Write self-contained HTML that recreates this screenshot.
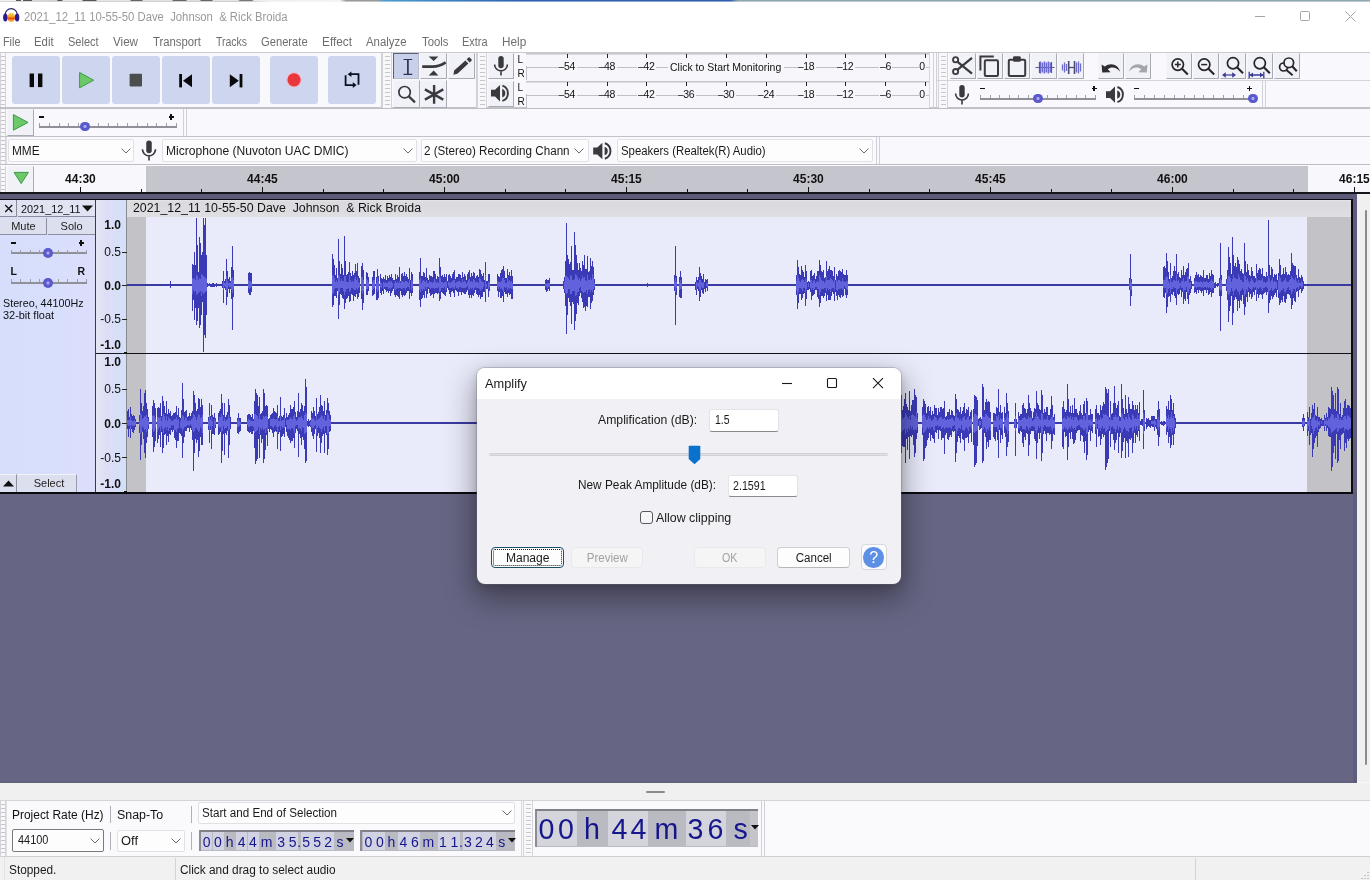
<!DOCTYPE html>
<html lang="en"><head><meta charset="utf-8"><title>Audacity</title>
<style>
*{box-sizing:border-box;margin:0;padding:0}
html,body{width:1370px;height:880px;overflow:hidden;background:#fff}
body{font-family:"Liberation Sans",sans-serif;font-size:12px;position:relative}
#app{position:absolute;left:0;top:0;width:1370px;height:880px;overflow:hidden;background:#f9f9fd;will-change:transform}
.t{position:absolute;white-space:pre;display:block}
.a{position:absolute}
.btn{position:absolute;background:#cdd6ee;border-radius:3px}
.tb{position:absolute;background:#f1f1f8;border:1px solid #a9aab4;border-top-color:#f4f4fa;border-left-color:#f4f4fa}
.grab{position:absolute;background:repeating-linear-gradient(to bottom,rgba(0,0,0,0) 0,rgba(0,0,0,0) 3px,#c6c6cc 3px,#c6c6cc 4px) no-repeat center/5px 100%,#f8f8fb;border-left:1px solid #d4d4da;border-right:1px solid #d4d4da}
.combo{position:absolute;background:#fdfdfe;border:1px solid #e0e0e6;border-radius:2px}
svg{position:absolute;overflow:visible}
</style></head>
<body><div id="app">
<div style="position:absolute;left:0px;top:0px;width:1370px;height:33px;background:#fff;"></div>
<div style="position:absolute;left:0px;top:0px;width:1370px;height:1px;background:linear-gradient(to right,#f0eef0 0,#f0eef0 16px,#5a5a5a 16px,#5a5a5a 21px,#eee 21px,#eee 23px,#555 23px,#555 32px,#d8d8d8 32px,#d0d0d0 57px,#444 58px,#666 62px,#e4e4e4 63px,#e4e4e4 82px,#555 83px,#555 96px,#e4e4e4 97px,#e4e4e4 130px,#666 131px,#666 142px,#e0e0e0 143px,#e0e0e0 172px,#666 173px,#666 186px,#ddd 187px,#ddd 200px,#666 201px,#666 212px,#e4e4e4 213px,#e4e4e4 238px,#777 240px,#777 252px,#eee 254px,#f4f4f4 340px,#9a9a9a 346px,#9a9a9a 376px,#4a9ccc 384px,#3f86c4 440px,#2f62b2 520px,#2e5eae 730px,#8ea6b0 738px,#8fa7b1 100%);"></div>
<div style="position:absolute;left:0px;top:1px;width:1370px;height:1px;background:linear-gradient(to right,#d8d8d8 0,#cfcfcf 250px,#f4f4f4 270px,#f4f4f4 340px,#c8c8c8 346px,#c4c4c4 376px,#9cc8e4 384px,#8fb4dc 440px,#8aa6d4 520px,#8aa4d2 730px,#bccbd2 738px,#bccbd2 100%);"></div>
<div style="position:absolute;left:0px;top:33px;width:1370px;height:20px;background:#fff;"></div>
<div style="position:absolute;left:0px;top:52px;width:1370px;height:1px;background:#c9c9cf;"></div>
<div style="position:absolute;left:0px;top:53px;width:1370px;height:113px;background:#f9f9fd;"></div>
<svg style="left:3px;top:8px" width="17" height="15" viewBox="0 0 17 15">
<defs><linearGradient id="ag" x1="0" y1="0" x2="0" y2="1"><stop offset="0" stop-color="#f4e060"/><stop offset="0.45" stop-color="#f59a1c"/><stop offset="0.62" stop-color="#e84a14"/><stop offset="0.8" stop-color="#f59a2a"/><stop offset="1" stop-color="#f8c070"/></linearGradient></defs>
<ellipse cx="8.2" cy="9.4" rx="3.9" ry="4.6" fill="url(#ag)"/>
<path d="M2.2 8V6.6A6 6 0 0 1 14.2 6.6V8" fill="none" stroke="#2c2c6e" stroke-width="1.2"/>
<ellipse cx="2.3" cy="9.6" rx="2.2" ry="4" fill="#2a1c92"/>
<ellipse cx="14.1" cy="9.6" rx="2.2" ry="4" fill="#2a1c92"/>
</svg>
<span class="t" style="left:24.0px;top:8.5px;font-size:12px;line-height:17px;color:#9a9a9a;transform:scaleX(0.9416);transform-origin:0 50%;">2021_12_11 10-55-50 Dave &nbsp;Johnson &nbsp;&amp; Rick Broida</span>
<svg style="left:1250px;top:8px" width="112" height="18" viewBox="0 0 112 18" fill="none" stroke="#a6a6a6" stroke-width="1">
<path d="M5 8.5H15"/><rect x="50.5" y="3.5" width="9" height="9" rx="1"/><path d="M95.5 3.5L105.5 13.5M105.5 3.5L95.5 13.5"/></svg>
<span class="t" style="left:2.6px;top:33.5px;font-size:12px;line-height:17px;color:#6e6e6e;transform:scaleX(0.8999);transform-origin:0 50%;">File</span>
<span class="t" style="left:34.4px;top:33.5px;font-size:12px;line-height:17px;color:#6e6e6e;transform:scaleX(0.9479);transform-origin:0 50%;">Edit</span>
<span class="t" style="left:68.4px;top:33.5px;font-size:12px;line-height:17px;color:#6e6e6e;transform:scaleX(0.9175);transform-origin:0 50%;">Select</span>
<span class="t" style="left:113.0px;top:33.5px;font-size:12px;line-height:17px;color:#6e6e6e;transform:scaleX(0.9693);transform-origin:0 50%;">View</span>
<span class="t" style="left:153.0px;top:33.5px;font-size:12px;line-height:17px;color:#6e6e6e;transform:scaleX(0.9429);transform-origin:0 50%;">Transport</span>
<span class="t" style="left:216.0px;top:33.5px;font-size:12px;line-height:17px;color:#6e6e6e;transform:scaleX(0.8719);transform-origin:0 50%;">Tracks</span>
<span class="t" style="left:261.4px;top:33.5px;font-size:12px;line-height:17px;color:#6e6e6e;transform:scaleX(0.9314);transform-origin:0 50%;">Generate</span>
<span class="t" style="left:322.0px;top:33.5px;font-size:12px;line-height:17px;color:#6e6e6e;transform:scaleX(0.9848);transform-origin:0 50%;">Effect</span>
<span class="t" style="left:366.4px;top:33.5px;font-size:12px;line-height:17px;color:#6e6e6e;transform:scaleX(0.9510);transform-origin:0 50%;">Analyze</span>
<span class="t" style="left:421.6px;top:33.5px;font-size:12px;line-height:17px;color:#6e6e6e;transform:scaleX(0.9424);transform-origin:0 50%;">Tools</span>
<span class="t" style="left:462.4px;top:33.5px;font-size:12px;line-height:17px;color:#6e6e6e;transform:scaleX(0.9140);transform-origin:0 50%;">Extra</span>
<span class="t" style="left:502.4px;top:33.5px;font-size:12px;line-height:17px;color:#6e6e6e;transform:scaleX(0.9806);transform-origin:0 50%;">Help</span>
<div class="grab" style="position:absolute;left:0px;top:53px;width:6px;height:55px;background:;"></div>
<div style="position:absolute;left:0px;top:107px;width:1370px;height:2px;background:linear-gradient(to bottom,#c4c6ca,#babdc0);"></div>
<div class="btn" style="left:12px;top:56px;width:48px;height:48px"></div>
<div class="btn" style="left:62px;top:56px;width:48px;height:48px"></div>
<div class="btn" style="left:112px;top:56px;width:48px;height:48px"></div>
<div class="btn" style="left:162px;top:56px;width:48px;height:48px"></div>
<div class="btn" style="left:212px;top:56px;width:48px;height:48px"></div>
<div class="btn" style="left:270px;top:56px;width:48px;height:48px"></div>
<div class="btn" style="left:328px;top:56px;width:48px;height:48px"></div>
<svg style="left:12px;top:56px" width="48" height="48" viewBox="0 0 48 48"><rect x="17.6" y="17.5" width="4.4" height="13.6" fill="#0a0a0a"/><rect x="26" y="17.5" width="4.4" height="13.6" fill="#0a0a0a"/></svg>
<svg style="left:62px;top:56px" width="48" height="48" viewBox="0 0 48 48"><path d="M17.6 16.5L31.6 24.2L17.6 31.8Z" fill="#6cc868" stroke="#3f9a45" stroke-width="1" stroke-linejoin="round"/></svg>
<svg style="left:112px;top:56px" width="48" height="48" viewBox="0 0 48 48"><rect x="17.6" y="17.8" width="12.4" height="12.6" rx="0.8" fill="#4a4e4c"/></svg>
<svg style="left:162px;top:56px" width="48" height="48" viewBox="0 0 48 48"><rect x="17.2" y="18" width="2.8" height="13.4" fill="#0a0a0a"/><path d="M30 18.2V31.2L21 24.7Z" fill="#0a0a0a"/></svg>
<svg style="left:212px;top:56px" width="48" height="48" viewBox="0 0 48 48"><rect x="27.6" y="18" width="2.8" height="13.4" fill="#0a0a0a"/><path d="M17.8 18.2V31.2L26.8 24.7Z" fill="#0a0a0a"/></svg>
<svg style="left:270px;top:56px" width="48" height="48" viewBox="0 0 48 48"><circle cx="24" cy="23.8" r="7.6" fill="#f5b8c4"/><circle cx="24" cy="23.8" r="6.6" fill="#e8383c"/></svg>
<svg style="left:328px;top:56px" width="48" height="48" viewBox="0 0 48 48"><path d="M22.6 18.2H30.5V28.8M17.6 19.2V29.1H25.6" fill="none" stroke="#0c1020" stroke-width="1.8"/><path d="M19.6 18.2L23.4 15.4V21Z M28.6 29.1L24.8 26.3V31.9Z" fill="#0c1020"/></svg>
<div class="grab" style="position:absolute;left:382px;top:53px;width:10px;height:55px;background:;"></div>
<div style="position:absolute;left:381px;top:53px;width:1px;height:55px;background:#d0d0d8;"></div>
<div class="tb" style="left:393px;top:53px;width:26px;height:26px;background:#c9d0e9;border-color:#5c6074 #b8bccc #b8bccc #5c6074"></div>
<div class="tb" style="left:420px;top:53px;width:27px;height:26px"></div>
<div class="tb" style="left:448px;top:53px;width:27px;height:26px"></div>
<div class="tb" style="left:393px;top:80px;width:27px;height:28px"></div>
<div class="tb" style="left:420px;top:80px;width:27px;height:28px"></div>
<svg style="left:393px;top:53px" width="26" height="26" viewBox="0 0 26 26"><path d="M10.6 6.5H19.2M10.6 21.3H19.2" fill="none" stroke="#2c3254" stroke-width="1.2"/><path d="M14.9 6.5V21.3" fill="none" stroke="#2c3254" stroke-width="1.7"/></svg>
<svg style="left:420px;top:53px" width="26" height="26" viewBox="0 0 26 26"><path d="M8.6 3.6H18.4L13.7 7.9Z M8.6 22.4H18.4L13.7 17.6Z" fill="#3a3a3e"/><path d="M2.2 13.6H12.4C18 13.6 22 12 25.6 9.4" fill="none" stroke="#3a3a3e" stroke-width="2.6"/></svg>
<svg style="left:448px;top:53px" width="26" height="26" viewBox="0 0 26 26"><path d="M5.4 21.8L6.2 17.6L17.4 7.4L20.4 10.6L9.4 20.8Z" fill="#3a3a3e"/><path d="M18.6 6.3L20.6 4.5Q21.2 4 21.8 4.6L23.6 6.6Q24.1 7.2 23.5 7.8L21.6 9.5Z" fill="#3a3a3e"/></svg>
<svg style="left:393px;top:81px" width="26" height="26" viewBox="0 0 26 26"><circle cx="11.6" cy="11.2" r="5.7" fill="none" stroke="#3a3a3e" stroke-width="1.7"/><path d="M15.8 15.4L22 21.4" stroke="#3a3a3e" stroke-width="2.2"/></svg>
<svg style="left:420px;top:81px" width="26" height="26" viewBox="0 0 26 26"><path d="M14.1 4V22.8M4.9 8.4L23.3 18.6M4.9 18.6L23.3 8.4" stroke="#3a3a3e" stroke-width="2.4" fill="none"/></svg>
<div class="grab" style="position:absolute;left:477px;top:53px;width:10px;height:55px;background:;"></div>
<div style="position:absolute;left:476px;top:53px;width:1px;height:55px;background:#d0d0d8;"></div>
<div class="tb" style="left:488px;top:53px;width:26px;height:26px"></div>
<div class="tb" style="left:488px;top:81px;width:26px;height:26px"></div>
<svg style="left:488px;top:53px" width="26" height="26" viewBox="0 0 26 26"><g transform="translate(13,13.3)"><rect x="-2.7" y="-10.4" width="5.4" height="12.4" rx="2.7" fill="#3a3a3e"/><path d="M-6.4 -1.8A6.4 6.4 0 0 0 6.4 -1.8M0 4.6V9.2" fill="none" stroke="#3a3a3e" stroke-width="1.6"/></g></svg>
<svg style="left:488px;top:81px" width="26" height="26" viewBox="0 0 26 26"><g transform="translate(13,12.2)"><path d="M-10 -3.4H-6L-1 -8.2V8.2L-6 3.4H-10Z" fill="#3a3a3e"/><path d="M1.4 -7.6A8 8 0 0 1 1.4 7.6" fill="none" stroke="#3a3a3e" stroke-width="1.9"/><path d="M1.2 -4.2A4.4 4.4 0 0 1 1.2 4.2Z" fill="#3a3a3e"/></g></svg>
<span class="t" style="left:517.6px;top:52.9px;font-size:10px;line-height:14px;color:#111;">L</span>
<span class="t" style="left:517.6px;top:67.3px;font-size:10px;line-height:14px;color:#111;">R</span>
<span class="t" style="left:517.6px;top:80.9px;font-size:10px;line-height:14px;color:#111;">L</span>
<span class="t" style="left:517.6px;top:94.9px;font-size:10px;line-height:14px;color:#111;">R</span>
<div style="position:absolute;left:526px;top:53px;width:404px;height:55px;background:#f6f6fb;"></div>
<div style="position:absolute;left:526px;top:53px;width:404px;height:1px;background:#c4c4cc;"></div>
<div style="position:absolute;left:526px;top:54px;width:404px;height:1px;background:#dcdce4;"></div>
<div style="position:absolute;left:526px;top:67px;width:404px;height:1px;background:#c0c0c8;"></div>
<div style="position:absolute;left:526px;top:66px;width:1px;height:14px;background:#c0c0c8;"></div>
<div style="position:absolute;left:526px;top:81px;width:404px;height:1px;background:#c4c4cc;"></div>
<div style="position:absolute;left:526px;top:82px;width:404px;height:1px;background:#dcdce4;"></div>
<div style="position:absolute;left:526px;top:95px;width:404px;height:1px;background:#c0c0c8;"></div>
<div style="position:absolute;left:526px;top:94px;width:1px;height:14px;background:#c0c0c8;"></div>
<div style="position:absolute;left:929px;top:53px;width:1px;height:55px;background:#d8d8e0;"></div>
<div style="position:absolute;left:567px;top:54.099999999999994px;width:1px;height:4px;background:#222;"></div>
<div style="position:absolute;left:558px;top:61.099999999999994px;width:19px;height:12px;background:#f6f6fb;"></div>
<span class="t" style="left:558.6px;top:59.1px;font-size:10.5px;line-height:15px;color:#111;letter-spacing:-0.4px;">–54</span>
<div style="position:absolute;left:607px;top:54.099999999999994px;width:1px;height:4px;background:#222;"></div>
<div style="position:absolute;left:598px;top:61.099999999999994px;width:19px;height:12px;background:#f6f6fb;"></div>
<span class="t" style="left:598.6px;top:59.1px;font-size:10.5px;line-height:15px;color:#111;letter-spacing:-0.4px;">–48</span>
<div style="position:absolute;left:646px;top:54.099999999999994px;width:1px;height:4px;background:#222;"></div>
<div style="position:absolute;left:637px;top:61.099999999999994px;width:19px;height:12px;background:#f6f6fb;"></div>
<span class="t" style="left:638.0px;top:59.1px;font-size:10.5px;line-height:15px;color:#111;letter-spacing:-0.4px;">–42</span>
<div style="position:absolute;left:686px;top:54.099999999999994px;width:1px;height:4px;background:#222;"></div>
<div style="position:absolute;left:726px;top:54.099999999999994px;width:1px;height:4px;background:#222;"></div>
<div style="position:absolute;left:766px;top:54.099999999999994px;width:1px;height:4px;background:#222;"></div>
<div style="position:absolute;left:806px;top:54.099999999999994px;width:1px;height:4px;background:#222;"></div>
<div style="position:absolute;left:797px;top:61.099999999999994px;width:19px;height:12px;background:#f6f6fb;"></div>
<span class="t" style="left:797.8px;top:59.1px;font-size:10.5px;line-height:15px;color:#111;letter-spacing:-0.4px;">–18</span>
<div style="position:absolute;left:845px;top:54.099999999999994px;width:1px;height:4px;background:#222;"></div>
<div style="position:absolute;left:836px;top:61.099999999999994px;width:19px;height:12px;background:#f6f6fb;"></div>
<span class="t" style="left:836.8px;top:59.1px;font-size:10.5px;line-height:15px;color:#111;letter-spacing:-0.4px;">–12</span>
<div style="position:absolute;left:885px;top:54.099999999999994px;width:1px;height:4px;background:#222;"></div>
<div style="position:absolute;left:879px;top:61.099999999999994px;width:13px;height:12px;background:#f6f6fb;"></div>
<span class="t" style="left:880.0px;top:59.1px;font-size:10.5px;line-height:15px;color:#111;letter-spacing:-0.4px;">–6</span>
<div style="position:absolute;left:925px;top:54.099999999999994px;width:1px;height:4px;background:#222;"></div>
<div style="position:absolute;left:919px;top:61.099999999999994px;width:7px;height:12px;background:#f6f6fb;"></div>
<span class="t" style="left:919.3px;top:59.1px;font-size:10.5px;line-height:15px;color:#111;letter-spacing:-0.4px;">0</span>
<div style="position:absolute;left:567px;top:82.1px;width:1px;height:4px;background:#222;"></div>
<div style="position:absolute;left:558px;top:89.1px;width:19px;height:12px;background:#f6f6fb;"></div>
<span class="t" style="left:558.6px;top:87.1px;font-size:10.5px;line-height:15px;color:#111;letter-spacing:-0.4px;">–54</span>
<div style="position:absolute;left:607px;top:82.1px;width:1px;height:4px;background:#222;"></div>
<div style="position:absolute;left:598px;top:89.1px;width:19px;height:12px;background:#f6f6fb;"></div>
<span class="t" style="left:598.6px;top:87.1px;font-size:10.5px;line-height:15px;color:#111;letter-spacing:-0.4px;">–48</span>
<div style="position:absolute;left:646px;top:82.1px;width:1px;height:4px;background:#222;"></div>
<div style="position:absolute;left:637px;top:89.1px;width:19px;height:12px;background:#f6f6fb;"></div>
<span class="t" style="left:638.0px;top:87.1px;font-size:10.5px;line-height:15px;color:#111;letter-spacing:-0.4px;">–42</span>
<div style="position:absolute;left:686px;top:82.1px;width:1px;height:4px;background:#222;"></div>
<div style="position:absolute;left:677px;top:89.1px;width:19px;height:12px;background:#f6f6fb;"></div>
<span class="t" style="left:677.8px;top:87.1px;font-size:10.5px;line-height:15px;color:#111;letter-spacing:-0.4px;">–36</span>
<div style="position:absolute;left:726px;top:82.1px;width:1px;height:4px;background:#222;"></div>
<div style="position:absolute;left:717px;top:89.1px;width:19px;height:12px;background:#f6f6fb;"></div>
<span class="t" style="left:717.8px;top:87.1px;font-size:10.5px;line-height:15px;color:#111;letter-spacing:-0.4px;">–30</span>
<div style="position:absolute;left:766px;top:82.1px;width:1px;height:4px;background:#222;"></div>
<div style="position:absolute;left:757px;top:89.1px;width:19px;height:12px;background:#f6f6fb;"></div>
<span class="t" style="left:757.8px;top:87.1px;font-size:10.5px;line-height:15px;color:#111;letter-spacing:-0.4px;">–24</span>
<div style="position:absolute;left:806px;top:82.1px;width:1px;height:4px;background:#222;"></div>
<div style="position:absolute;left:797px;top:89.1px;width:19px;height:12px;background:#f6f6fb;"></div>
<span class="t" style="left:797.8px;top:87.1px;font-size:10.5px;line-height:15px;color:#111;letter-spacing:-0.4px;">–18</span>
<div style="position:absolute;left:845px;top:82.1px;width:1px;height:4px;background:#222;"></div>
<div style="position:absolute;left:836px;top:89.1px;width:19px;height:12px;background:#f6f6fb;"></div>
<span class="t" style="left:836.8px;top:87.1px;font-size:10.5px;line-height:15px;color:#111;letter-spacing:-0.4px;">–12</span>
<div style="position:absolute;left:885px;top:82.1px;width:1px;height:4px;background:#222;"></div>
<div style="position:absolute;left:879px;top:89.1px;width:13px;height:12px;background:#f6f6fb;"></div>
<span class="t" style="left:880.0px;top:87.1px;font-size:10.5px;line-height:15px;color:#111;letter-spacing:-0.4px;">–6</span>
<div style="position:absolute;left:925px;top:82.1px;width:1px;height:4px;background:#222;"></div>
<div style="position:absolute;left:919px;top:89.1px;width:7px;height:12px;background:#f6f6fb;"></div>
<span class="t" style="left:919.3px;top:87.1px;font-size:10.5px;line-height:15px;color:#111;letter-spacing:-0.4px;">0</span>
<div style="position:absolute;left:668px;top:61px;width:116px;height:12px;background:#f6f6fb;"></div>
<span class="t" style="left:670.4px;top:59.5px;font-size:11px;line-height:15px;color:#111;transform:scaleX(0.9524);transform-origin:0 50%;">Click to Start Monitoring</span>
<div style="position:absolute;left:933px;top:53px;width:1px;height:55px;background:#d0d0d8;"></div>
<div style="position:absolute;left:936px;top:53px;width:1px;height:55px;background:#d0d0d8;"></div>
<div class="grab" style="position:absolute;left:938px;top:53px;width:10px;height:27px;background:;"></div>
<div class="grab" style="position:absolute;left:938px;top:81px;width:10px;height:27px;background:;"></div>
<div style="position:absolute;left:937px;top:80px;width:440px;height:1px;background:#d4d4dc;"></div>
<div class="tb" style="left:950px;top:53px;width:26px;height:26px"></div>
<div class="tb" style="left:977px;top:53px;width:26px;height:26px"></div>
<div class="tb" style="left:1004px;top:53px;width:26px;height:26px"></div>
<div class="tb" style="left:1031px;top:53px;width:26px;height:26px"></div>
<div class="tb" style="left:1058px;top:53px;width:26px;height:26px"></div>
<div class="tb" style="left:1098px;top:53px;width:26px;height:26px"></div>
<div class="tb" style="left:1125px;top:53px;width:26px;height:26px"></div>
<div class="tb" style="left:1166px;top:53px;width:26px;height:26px"></div>
<div class="tb" style="left:1193px;top:53px;width:26px;height:26px"></div>
<div class="tb" style="left:1220px;top:53px;width:26px;height:26px"></div>
<div class="tb" style="left:1247px;top:53px;width:26px;height:26px"></div>
<div class="tb" style="left:1274px;top:53px;width:26px;height:26px"></div>
<svg style="left:950px;top:53px" width="26" height="26" viewBox="0 0 26 26"><circle cx="5.6" cy="6.8" r="2.6" fill="none" stroke="#3a3a3e" stroke-width="1.8"/><circle cx="5.6" cy="18.6" r="2.6" fill="none" stroke="#3a3a3e" stroke-width="1.8"/><path d="M7.6 8.8L22 20.6M7.6 16.6L22 4.8" stroke="#3a3a3e" stroke-width="2.3" fill="none"/></svg>
<svg style="left:977px;top:53px" width="26" height="26" viewBox="0 0 26 26"><path d="M3.4 17.6V3.4H16.8" fill="none" stroke="#3a3a3e" stroke-width="2"/><rect x="7.8" y="7.2" width="13.2" height="15.8" rx="1.2" fill="none" stroke="#3a3a3e" stroke-width="2"/></svg>
<svg style="left:1004px;top:53px" width="26" height="26" viewBox="0 0 26 26"><rect x="4.8" y="6.8" width="16.4" height="16.2" rx="1.2" fill="none" stroke="#3a3a3e" stroke-width="2"/><rect x="9" y="3.2" width="7.8" height="5.6" rx="1.4" fill="#3a3a3e"/></svg>
<svg style="left:1031px;top:53px" width="26" height="26" viewBox="0 0 26 26"><path d="M4.5 14.5H23.6" stroke="#5a5c8c" stroke-width="1"/><path d="M9.4 8.6V20.4M11.4 9.6V19.4M13.4 8.6V20.4M15.4 9.6V19.4M17.4 8.6V20.4M19.4 9.6V19.4" stroke="#6c6acc" stroke-width="1.5"/><path d="M8.4 9V20M20.6 9V20" stroke="#4c4e84" stroke-width="1"/></svg>
<svg style="left:1058px;top:53px" width="26" height="26" viewBox="0 0 26 26"><path d="M4.5 11.6V17.4M6.5 9.6V19.4M8.5 11V18M18.5 9.6V19.4M20.5 8.6V20.4M22.5 10.6V18.4" stroke="#6c6acc" stroke-width="1.3"/><path d="M10.6 14.5H16.6" stroke="#4a4c70" stroke-width="1.3"/><path d="M10.7 8V21M16.5 8V21" stroke="#4a4c70" stroke-width="1.6"/></svg>
<svg style="left:1098px;top:53px" width="26" height="26" viewBox="0 0 26 26"><path d="M3.6 11.4L4.2 19.6L12.6 19.2L9.8 16.2C13.2 13.6 18.4 14 22 18.8C21 12 13 8.6 6.8 13.4Z" fill="#2e2e32"/></svg>
<svg style="left:1125px;top:53px" width="26" height="26" viewBox="0 0 26 26"><g transform="translate(26,0) scale(-1,1)"><path d="M3.6 11.4L4.2 19.6L12.6 19.2L9.8 16.2C13.2 13.6 18.4 14 22 18.8C21 12 13 8.6 6.8 13.4Z" fill="#a2a5aa"/></g></svg>
<svg style="left:1166px;top:53px" width="26" height="26" viewBox="0 0 26 26"><circle cx="11.8" cy="11.6" r="5.7" fill="none" stroke="#26262a" stroke-width="1.7"/><path d="M15.8 15.6L21.8 21.6" stroke="#26262a" stroke-width="2.1"/><path d="M8.8 11.6H14.8M11.8 8.6V14.6" stroke="#26262a" stroke-width="1.5"/></svg>
<svg style="left:1193px;top:53px" width="26" height="26" viewBox="0 0 26 26"><circle cx="11.2" cy="11.6" r="5.7" fill="none" stroke="#26262a" stroke-width="1.7"/><path d="M15.2 15.6L21.2 21.6" stroke="#26262a" stroke-width="2.1"/><path d="M8.2 11.6H14.2" stroke="#26262a" stroke-width="1.5"/></svg>
<svg style="left:1220px;top:53px" width="26" height="26" viewBox="0 0 26 26"><circle cx="13" cy="10.2" r="5.6" fill="none" stroke="#26262a" stroke-width="1.7"/><path d="M17 14.2L23 20.2" stroke="#26262a" stroke-width="2.1"/><path d="M4.4 22H13.6" stroke="#3a3a96" stroke-width="1.2"/><path d="M2 22L5.8 19.2V24.8ZM16 22L12.2 19.2V24.8Z" fill="#3a3a96"/></svg>
<svg style="left:1247px;top:53px" width="26" height="26" viewBox="0 0 26 26"><circle cx="12.8" cy="10.2" r="5.6" fill="none" stroke="#26262a" stroke-width="1.7"/><path d="M16.8 14.2L22.8 20.2" stroke="#26262a" stroke-width="2.1"/><path d="M2.2 18.8V25.2M16.8 18.8V25.2M3 22H16" stroke="#3a3a96" stroke-width="1.3" fill="none"/><path d="M2.6 22L6 19.6V24.4ZM16.4 22L13 19.6V24.4Z" fill="#3a3a96"/></svg>
<svg style="left:1274px;top:53px" width="26" height="26" viewBox="0 0 26 26"><circle cx="9.6" cy="14" r="4" fill="none" stroke="#26262a" stroke-width="1.7"/><path d="M12.4 17L18.6 22.2" stroke="#26262a" stroke-width="2"/><circle cx="14.8" cy="9.8" r="4.8" fill="#f1f1f8" stroke="#26262a" stroke-width="1.7"/><path d="M18.2 13.2L22.8 18.2" stroke="#26262a" stroke-width="2.1"/></svg>
<svg style="left:949px;top:82px" width="26" height="26" viewBox="0 0 26 26"><g transform="translate(13,13.4)"><rect x="-2.7" y="-10.4" width="5.4" height="12.4" rx="2.7" fill="#3a3a3e"/><path d="M-6.4 -1.8A6.4 6.4 0 0 0 6.4 -1.8M0 4.6V9.2" fill="none" stroke="#3a3a3e" stroke-width="1.6"/></g></svg>
<svg style="left:1102px;top:82px" width="26" height="26" viewBox="0 0 26 26"><g transform="translate(14,12.6)"><path d="M-10 -3.4H-6L-1 -8.2V8.2L-6 3.4H-10Z" fill="#3a3a3e"/><path d="M1.4 -7.6A8 8 0 0 1 1.4 7.6" fill="none" stroke="#3a3a3e" stroke-width="1.9"/><path d="M1.2 -4.2A4.4 4.4 0 0 1 1.2 4.2Z" fill="#3a3a3e"/></g></svg>
<div style="position:absolute;left:980px;top:97.8px;width:116px;height:2px;background:#909098;"></div><div style="position:absolute;left:980px;top:95px;width:1px;height:3px;background:#a0a0a8;"></div><div style="position:absolute;left:990px;top:95px;width:1px;height:3px;background:#a0a0a8;"></div><div style="position:absolute;left:999px;top:95px;width:1px;height:3px;background:#a0a0a8;"></div><div style="position:absolute;left:1009px;top:95px;width:1px;height:3px;background:#a0a0a8;"></div><div style="position:absolute;left:1018px;top:95px;width:1px;height:3px;background:#a0a0a8;"></div><div style="position:absolute;left:1028px;top:95px;width:1px;height:3px;background:#a0a0a8;"></div><div style="position:absolute;left:1038px;top:95px;width:1px;height:3px;background:#a0a0a8;"></div><div style="position:absolute;left:1047px;top:95px;width:1px;height:3px;background:#a0a0a8;"></div><div style="position:absolute;left:1057px;top:95px;width:1px;height:3px;background:#a0a0a8;"></div><div style="position:absolute;left:1066px;top:95px;width:1px;height:3px;background:#a0a0a8;"></div><div style="position:absolute;left:1076px;top:95px;width:1px;height:3px;background:#a0a0a8;"></div><div style="position:absolute;left:1085px;top:95px;width:1px;height:3px;background:#a0a0a8;"></div><div style="position:absolute;left:1095px;top:95px;width:1px;height:3px;background:#a0a0a8;"></div><div class="a" style="left:1033.1px;top:93.6px;width:9.8px;height:9.8px;border-radius:50%;background:radial-gradient(circle at 50% 50%,#a8a8f0 0,#a8a8f0 1.2px,#5a5acc 2px,#5a5acc 100%)"></div><div style="position:absolute;left:979.5px;top:88.2px;width:5px;height:1.2px;background:#111;"></div><div style="position:absolute;left:1091.5px;top:88.2px;width:5px;height:1.2px;background:#111;"></div><div style="position:absolute;left:1093.4px;top:86.2px;width:1.2px;height:5.2px;background:#111;"></div>
<div style="position:absolute;left:1134px;top:97.8px;width:120px;height:2px;background:#909098;"></div><div style="position:absolute;left:1134px;top:95px;width:1px;height:3px;background:#a0a0a8;"></div><div style="position:absolute;left:1144px;top:95px;width:1px;height:3px;background:#a0a0a8;"></div><div style="position:absolute;left:1154px;top:95px;width:1px;height:3px;background:#a0a0a8;"></div><div style="position:absolute;left:1164px;top:95px;width:1px;height:3px;background:#a0a0a8;"></div><div style="position:absolute;left:1174px;top:95px;width:1px;height:3px;background:#a0a0a8;"></div><div style="position:absolute;left:1184px;top:95px;width:1px;height:3px;background:#a0a0a8;"></div><div style="position:absolute;left:1194px;top:95px;width:1px;height:3px;background:#a0a0a8;"></div><div style="position:absolute;left:1203px;top:95px;width:1px;height:3px;background:#a0a0a8;"></div><div style="position:absolute;left:1213px;top:95px;width:1px;height:3px;background:#a0a0a8;"></div><div style="position:absolute;left:1223px;top:95px;width:1px;height:3px;background:#a0a0a8;"></div><div style="position:absolute;left:1233px;top:95px;width:1px;height:3px;background:#a0a0a8;"></div><div style="position:absolute;left:1243px;top:95px;width:1px;height:3px;background:#a0a0a8;"></div><div style="position:absolute;left:1253px;top:95px;width:1px;height:3px;background:#a0a0a8;"></div><div class="a" style="left:1248.1px;top:93.6px;width:9.8px;height:9.8px;border-radius:50%;background:radial-gradient(circle at 50% 50%,#a8a8f0 0,#a8a8f0 1.2px,#5a5acc 2px,#5a5acc 100%)"></div><div style="position:absolute;left:1133.5px;top:88.2px;width:5px;height:1.2px;background:#111;"></div><div style="position:absolute;left:1247.1px;top:88.2px;width:5px;height:1.2px;background:#111;"></div><div style="position:absolute;left:1249.0px;top:86.2px;width:1.2px;height:5.2px;background:#111;"></div>
<div style="position:absolute;left:1262px;top:81px;width:1px;height:27px;background:#d0d0d8;"></div>
<div style="position:absolute;left:1265px;top:81px;width:1px;height:27px;background:#d0d0d8;"></div>
<div class="grab" style="position:absolute;left:0px;top:109px;width:6px;height:27px;background:;"></div>
<div class="tb" style="left:7px;top:109px;width:27px;height:27px"></div>
<svg style="left:7px;top:109px" width="27" height="27" viewBox="0 0 27 27"><path d="M6.4 5.6L21 13.4L6.4 21.2Z" fill="#6cc868" stroke="#3f9a45" stroke-width="1" stroke-linejoin="round"/></svg>
<div style="position:absolute;left:39px;top:125.8px;width:138px;height:2px;background:#909098;"></div><div style="position:absolute;left:39px;top:123px;width:1px;height:3px;background:#a0a0a8;"></div><div style="position:absolute;left:49px;top:123px;width:1px;height:3px;background:#a0a0a8;"></div><div style="position:absolute;left:59px;top:123px;width:1px;height:3px;background:#a0a0a8;"></div><div style="position:absolute;left:68px;top:123px;width:1px;height:3px;background:#a0a0a8;"></div><div style="position:absolute;left:78px;top:123px;width:1px;height:3px;background:#a0a0a8;"></div><div style="position:absolute;left:88px;top:123px;width:1px;height:3px;background:#a0a0a8;"></div><div style="position:absolute;left:98px;top:123px;width:1px;height:3px;background:#a0a0a8;"></div><div style="position:absolute;left:108px;top:123px;width:1px;height:3px;background:#a0a0a8;"></div><div style="position:absolute;left:117px;top:123px;width:1px;height:3px;background:#a0a0a8;"></div><div style="position:absolute;left:127px;top:123px;width:1px;height:3px;background:#a0a0a8;"></div><div style="position:absolute;left:137px;top:123px;width:1px;height:3px;background:#a0a0a8;"></div><div style="position:absolute;left:147px;top:123px;width:1px;height:3px;background:#a0a0a8;"></div><div style="position:absolute;left:156px;top:123px;width:1px;height:3px;background:#a0a0a8;"></div><div style="position:absolute;left:166px;top:123px;width:1px;height:3px;background:#a0a0a8;"></div><div style="position:absolute;left:176px;top:123px;width:1px;height:3px;background:#a0a0a8;"></div><div class="a" style="left:80.1px;top:121.6px;width:9.8px;height:9.8px;border-radius:50%;background:radial-gradient(circle at 50% 50%,#a8a8f0 0,#a8a8f0 1.2px,#5a5acc 2px,#5a5acc 100%)"></div><div style="position:absolute;left:38.9px;top:116.39999999999999px;width:5px;height:1.2px;background:#111;"></div><div style="position:absolute;left:168.5px;top:116.39999999999999px;width:5px;height:1.2px;background:#111;"></div><div style="position:absolute;left:170.4px;top:114.39999999999999px;width:1.2px;height:5.2px;background:#111;"></div>
<div style="position:absolute;left:183px;top:109px;width:1px;height:27px;background:#d0d0d8;"></div>
<div style="position:absolute;left:186px;top:109px;width:1px;height:27px;background:#d0d0d8;"></div>
<div style="position:absolute;left:0px;top:136px;width:1370px;height:1px;background:#c2c2c8;"></div>
<div class="grab" style="position:absolute;left:0px;top:137px;width:6px;height:28px;background:;"></div>
<div style="position:absolute;left:6px;top:137px;width:1px;height:28px;background:#dcdce2;"></div>
<div class="combo" style="left:8px;top:139px;width:126px;height:23px;"></div><span class="t" style="left:12.4px;top:143.2px;font-size:12px;line-height:17px;color:#1a1a1a;transform:scaleX(0.9859);transform-origin:0 50%;">MME</span><svg style="left:121px;top:148px" width="10" height="6" viewBox="0 0 10 6"><path d="M0.6 0.6L5 5L9.4 0.6" fill="none" stroke="#6a6a6a" stroke-width="1"/></svg>
<svg style="left:140px;top:139px" width="18" height="24" viewBox="0 0 18 24"><g transform="translate(9,12.2) scale(1.02)"><rect x="-2.7" y="-10.4" width="5.4" height="12.4" rx="2.7" fill="#3a3a3e"/><path d="M-6.4 -1.8A6.4 6.4 0 0 0 6.4 -1.8M0 4.6V9.2" fill="none" stroke="#3a3a3e" stroke-width="1.6"/></g></svg>
<div class="combo" style="left:162px;top:139px;width:255px;height:23px;"></div><span class="t" style="left:166.4px;top:143.2px;font-size:12px;line-height:17px;color:#1a1a1a;transform:scaleX(1.0067);transform-origin:0 50%;">Microphone (Nuvoton UAC DMIC)</span><svg style="left:403px;top:148px" width="10" height="6" viewBox="0 0 10 6"><path d="M0.6 0.6L5 5L9.4 0.6" fill="none" stroke="#6a6a6a" stroke-width="1"/></svg>
<div class="combo" style="left:421px;top:139px;width:168px;height:23px;"></div><span class="t" style="left:424.0px;top:143.2px;font-size:12px;line-height:17px;color:#1a1a1a;transform:scaleX(0.9701);transform-origin:0 50%;">2 (Stereo) Recording Chann</span><svg style="left:574px;top:148px" width="10" height="6" viewBox="0 0 10 6"><path d="M0.6 0.6L5 5L9.4 0.6" fill="none" stroke="#6a6a6a" stroke-width="1"/></svg>
<svg style="left:592px;top:139px" width="22" height="24" viewBox="0 0 22 24"><g transform="translate(11.4,12) scale(1.02)"><path d="M-10 -3.4H-6L-1 -8.2V8.2L-6 3.4H-10Z" fill="#3a3a3e"/><path d="M1.4 -7.6A8 8 0 0 1 1.4 7.6" fill="none" stroke="#3a3a3e" stroke-width="1.9"/><path d="M1.2 -4.2A4.4 4.4 0 0 1 1.2 4.2Z" fill="#3a3a3e"/></g></svg>
<div class="combo" style="left:617px;top:139px;width:256px;height:23px;"></div><span class="t" style="left:621.0px;top:143.2px;font-size:12px;line-height:17px;color:#1a1a1a;transform:scaleX(0.9468);transform-origin:0 50%;">Speakers (Realtek(R) Audio)</span><svg style="left:859px;top:148px" width="10" height="6" viewBox="0 0 10 6"><path d="M0.6 0.6L5 5L9.4 0.6" fill="none" stroke="#6a6a6a" stroke-width="1"/></svg>
<div style="position:absolute;left:876px;top:137px;width:1px;height:28px;background:#d0d0d8;"></div>
<div style="position:absolute;left:879px;top:137px;width:1px;height:28px;background:#d0d0d8;"></div>
<div style="position:absolute;left:0px;top:164px;width:1370px;height:1px;background:#bcbcc2;"></div>
<div style="position:absolute;left:0px;top:165px;width:1370px;height:1px;background:#fbfbfe;"></div>
<div style="position:absolute;left:0px;top:166px;width:1370px;height:27px;background:#f8f8fc;"></div>
<div class="grab" style="position:absolute;left:0px;top:166px;width:6px;height:27px;background:;"></div>
<div class="tb" style="left:7px;top:166px;width:27px;height:27px"></div>
<svg style="left:7px;top:166px" width="27" height="27" viewBox="0 0 27 27"><path d="M7 6.4H21.4L14.2 17.6Z" fill="#6cc868" stroke="#3f9a45" stroke-width="1" stroke-linejoin="round"/></svg>
<div style="position:absolute;left:146px;top:166px;width:1162px;height:27px;background:#c5c5cd;"></div>
<div style="position:absolute;left:80px;top:187px;width:1px;height:6px;background:#111;"></div>
<span class="t" style="left:65.1px;top:170.7px;font-size:12px;line-height:17px;color:#111;font-weight:700;">44:30</span>
<div style="position:absolute;left:141px;top:189px;width:1px;height:4px;background:#111;"></div>
<div style="position:absolute;left:201px;top:189px;width:1px;height:4px;background:#111;"></div>
<div style="position:absolute;left:262px;top:187px;width:1px;height:6px;background:#111;"></div>
<span class="t" style="left:247.1px;top:170.7px;font-size:12px;line-height:17px;color:#111;font-weight:700;">44:45</span>
<div style="position:absolute;left:323px;top:189px;width:1px;height:4px;background:#111;"></div>
<div style="position:absolute;left:383px;top:189px;width:1px;height:4px;background:#111;"></div>
<div style="position:absolute;left:444px;top:187px;width:1px;height:6px;background:#111;"></div>
<span class="t" style="left:429.1px;top:170.7px;font-size:12px;line-height:17px;color:#111;font-weight:700;">45:00</span>
<div style="position:absolute;left:505px;top:189px;width:1px;height:4px;background:#111;"></div>
<div style="position:absolute;left:565px;top:189px;width:1px;height:4px;background:#111;"></div>
<div style="position:absolute;left:626px;top:187px;width:1px;height:6px;background:#111;"></div>
<span class="t" style="left:611.1px;top:170.7px;font-size:12px;line-height:17px;color:#111;font-weight:700;">45:15</span>
<div style="position:absolute;left:687px;top:189px;width:1px;height:4px;background:#111;"></div>
<div style="position:absolute;left:747px;top:189px;width:1px;height:4px;background:#111;"></div>
<div style="position:absolute;left:808px;top:187px;width:1px;height:6px;background:#111;"></div>
<span class="t" style="left:793.1px;top:170.7px;font-size:12px;line-height:17px;color:#111;font-weight:700;">45:30</span>
<div style="position:absolute;left:869px;top:189px;width:1px;height:4px;background:#111;"></div>
<div style="position:absolute;left:929px;top:189px;width:1px;height:4px;background:#111;"></div>
<div style="position:absolute;left:990px;top:187px;width:1px;height:6px;background:#111;"></div>
<span class="t" style="left:975.1px;top:170.7px;font-size:12px;line-height:17px;color:#111;font-weight:700;">45:45</span>
<div style="position:absolute;left:1051px;top:189px;width:1px;height:4px;background:#111;"></div>
<div style="position:absolute;left:1111px;top:189px;width:1px;height:4px;background:#111;"></div>
<div style="position:absolute;left:1172px;top:187px;width:1px;height:6px;background:#111;"></div>
<span class="t" style="left:1157.1px;top:170.7px;font-size:12px;line-height:17px;color:#111;font-weight:700;">46:00</span>
<div style="position:absolute;left:1233px;top:189px;width:1px;height:4px;background:#111;"></div>
<div style="position:absolute;left:1293px;top:189px;width:1px;height:4px;background:#111;"></div>
<div style="position:absolute;left:1354px;top:187px;width:1px;height:6px;background:#111;"></div>
<span class="t" style="left:1339.1px;top:170.7px;font-size:12px;line-height:17px;color:#111;font-weight:700;">46:15</span>
<div style="position:absolute;left:0px;top:192px;width:1370px;height:2px;background:#15151c;"></div>
<div style="position:absolute;left:0px;top:194px;width:1357px;height:5px;background:#5c5b7a;"></div>
<div style="position:absolute;left:0px;top:199px;width:1357px;height:584px;background:linear-gradient(to bottom,#666583 0,#666583 581px,#605f7a 584px);"></div>
<div style="position:absolute;left:1353px;top:194px;width:4px;height:589px;background:#5e5d7c;"></div>
<div style="position:absolute;left:1357px;top:194px;width:13px;height:588px;background:#f0f0f1;"></div>
<div style="position:absolute;left:1365.4px;top:210px;width:1.4px;height:555px;background:#8c8c8c;border-radius:1px"></div>
<div style="position:absolute;left:0px;top:199px;width:1353px;height:294px;background:#0a0a10;"></div>
<div style="position:absolute;left:0px;top:200px;width:95px;height:292px;background:linear-gradient(to right,#d6defc 0,#d8dffc 60%,#dcdefa 100%);"></div>
<div style="position:absolute;left:95px;top:200px;width:1px;height:292px;background:#3a3a48;"></div>
<div style="position:absolute;left:0px;top:200px;width:17px;height:17px;background:#dfe3f2;border-right:1px solid #8a8c9c;border-bottom:1px solid #8a8c9c"></div>
<svg style="left:0px;top:200px" width="17" height="17" viewBox="0 0 17 17"><path d="M5.2 5L12.2 12M12.2 5L5.2 12" stroke="#111" stroke-width="1.3"/></svg>
<div style="position:absolute;left:18px;top:200px;width:77px;height:17px;background:#dfe3f2;border-bottom:1px solid #8a8c9c"></div>
<span class="t" style="left:21.0px;top:200.6px;font-size:11.5px;line-height:16px;color:#111;transform:scaleX(0.9445);transform-origin:0 50%;">2021_12_11</span>
<svg style="left:82px;top:205px" width="11" height="7" viewBox="0 0 11 7"><path d="M0 0.4H11L5.5 6.4Z" fill="#111"/></svg>
<div style="position:absolute;left:0px;top:218px;width:47px;height:17px;background:#dcdfee;border-right:1px solid #8e90a0;border-bottom:1px solid #8e90a0"></div>
<div style="position:absolute;left:48px;top:218px;width:47px;height:17px;background:#dcdfee;border-bottom:1px solid #8e90a0"></div>
<span class="t" style="left:11.2px;top:218.9px;font-size:11px;line-height:15px;color:#222;">Mute</span>
<span class="t" style="left:60.6px;top:218.9px;font-size:11px;line-height:15px;color:#222;">Solo</span>
<div style="position:absolute;left:11px;top:252.4px;width:76px;height:2px;background:#909098;"></div><div style="position:absolute;left:11px;top:249.6px;width:1px;height:3px;background:#a0a0a8;"></div><div style="position:absolute;left:20px;top:249.6px;width:1px;height:3px;background:#a0a0a8;"></div><div style="position:absolute;left:30px;top:249.6px;width:1px;height:3px;background:#a0a0a8;"></div><div style="position:absolute;left:39px;top:249.6px;width:1px;height:3px;background:#a0a0a8;"></div><div style="position:absolute;left:48px;top:249.6px;width:1px;height:3px;background:#a0a0a8;"></div><div style="position:absolute;left:58px;top:249.6px;width:1px;height:3px;background:#a0a0a8;"></div><div style="position:absolute;left:67px;top:249.6px;width:1px;height:3px;background:#a0a0a8;"></div><div style="position:absolute;left:77px;top:249.6px;width:1px;height:3px;background:#a0a0a8;"></div><div style="position:absolute;left:86px;top:249.6px;width:1px;height:3px;background:#a0a0a8;"></div><div class="a" style="left:43.1px;top:248.2px;width:9.8px;height:9.8px;border-radius:50%;background:radial-gradient(circle at 50% 50%,#a8a8f0 0,#a8a8f0 1.2px,#5a5acc 2px,#5a5acc 100%)"></div><div style="position:absolute;left:10.7px;top:242.4px;width:5px;height:1.2px;background:#111;"></div><div style="position:absolute;left:78.5px;top:242.4px;width:5px;height:1.2px;background:#111;"></div><div style="position:absolute;left:80.4px;top:240.4px;width:1.2px;height:5.2px;background:#111;"></div>
<div style="position:absolute;left:11px;top:282.2px;width:76px;height:2px;background:#909098;"></div><div style="position:absolute;left:11px;top:279.4px;width:1px;height:3px;background:#a0a0a8;"></div><div style="position:absolute;left:20px;top:279.4px;width:1px;height:3px;background:#a0a0a8;"></div><div style="position:absolute;left:30px;top:279.4px;width:1px;height:3px;background:#a0a0a8;"></div><div style="position:absolute;left:39px;top:279.4px;width:1px;height:3px;background:#a0a0a8;"></div><div style="position:absolute;left:48px;top:279.4px;width:1px;height:3px;background:#a0a0a8;"></div><div style="position:absolute;left:58px;top:279.4px;width:1px;height:3px;background:#a0a0a8;"></div><div style="position:absolute;left:67px;top:279.4px;width:1px;height:3px;background:#a0a0a8;"></div><div style="position:absolute;left:77px;top:279.4px;width:1px;height:3px;background:#a0a0a8;"></div><div style="position:absolute;left:86px;top:279.4px;width:1px;height:3px;background:#a0a0a8;"></div><div class="a" style="left:43.1px;top:278.0px;width:9.8px;height:9.8px;border-radius:50%;background:radial-gradient(circle at 50% 50%,#a8a8f0 0,#a8a8f0 1.2px,#5a5acc 2px,#5a5acc 100%)"></div>
<span class="t" style="left:10.6px;top:264.1px;font-size:10.5px;line-height:15px;color:#111;font-weight:700;">L</span>
<span class="t" style="left:77.4px;top:264.1px;font-size:10.5px;line-height:15px;color:#111;font-weight:700;">R</span>
<span class="t" style="left:3.0px;top:296.1px;font-size:11px;line-height:15px;color:#111;transform:scaleX(0.9763);transform-origin:0 50%;">Stereo, 44100Hz</span>
<span class="t" style="left:3.0px;top:307.9px;font-size:11px;line-height:15px;color:#111;transform:scaleX(0.9929);transform-origin:0 50%;">32-bit float</span>
<div style="position:absolute;left:0px;top:474px;width:17px;height:19px;background:#dcdfee;border-right:1px solid #8e90a0;border-top:1px solid #f0f2fa"></div>
<svg style="left:3px;top:480px" width="11" height="7" viewBox="0 0 11 7"><path d="M0 6.6H11L5.5 0.6Z" fill="#111"/></svg>
<div style="position:absolute;left:18px;top:474px;width:59px;height:19px;background:#dcdfee;border-right:1px solid #9a9cac;border-top:1px solid #f0f2fa"></div>
<span class="t" style="left:33.7px;top:475.9px;font-size:11px;line-height:15px;color:#222;">Select</span>
<div style="position:absolute;left:96px;top:200px;width:30px;height:153px;background:linear-gradient(to right,#e4e6f4 0,#dddef6 35%,#d2e0f8 100%);"></div>
<div style="position:absolute;left:96px;top:354px;width:30px;height:138px;background:linear-gradient(to right,#e4e6f4 0,#dddef6 35%,#d2e0f8 100%);"></div>
<div style="position:absolute;left:126px;top:200px;width:1px;height:292px;background:#8a8a92;"></div>
<div style="position:absolute;left:96px;top:353px;width:31px;height:1px;background:#1a1a22;"></div>
<span class="t" style="left:104.3px;top:216.5px;font-size:12px;line-height:17px;color:#111;font-weight:700;">1.0</span>
<span class="t" style="left:104.3px;top:243.9px;font-size:12px;line-height:17px;color:#111;">0.5</span>
<span class="t" style="left:104.3px;top:277.5px;font-size:12px;line-height:17px;color:#111;font-weight:700;">0.0</span>
<span class="t" style="left:100.3px;top:310.9px;font-size:12px;line-height:17px;color:#111;">-0.5</span>
<span class="t" style="left:100.3px;top:336.9px;font-size:12px;line-height:17px;color:#111;font-weight:700;">-1.0</span>
<span class="t" style="left:104.3px;top:353.5px;font-size:12px;line-height:17px;color:#111;font-weight:700;">1.0</span>
<span class="t" style="left:104.3px;top:380.5px;font-size:12px;line-height:17px;color:#111;">0.5</span>
<span class="t" style="left:104.3px;top:415.5px;font-size:12px;line-height:17px;color:#111;font-weight:700;">0.0</span>
<span class="t" style="left:100.3px;top:449.5px;font-size:12px;line-height:17px;color:#111;">-0.5</span>
<span class="t" style="left:100.3px;top:475.5px;font-size:12px;line-height:17px;color:#111;font-weight:700;">-1.0</span>
<div style="position:absolute;left:122px;top:252px;width:5px;height:1px;background:#222;"></div>
<div style="position:absolute;left:122px;top:285px;width:5px;height:1px;background:#222;"></div>
<div style="position:absolute;left:122px;top:319px;width:5px;height:1px;background:#222;"></div>
<div style="position:absolute;left:122px;top:389px;width:5px;height:1px;background:#222;"></div>
<div style="position:absolute;left:122px;top:423px;width:5px;height:1px;background:#222;"></div>
<div style="position:absolute;left:122px;top:457px;width:5px;height:1px;background:#222;"></div>
<div style="position:absolute;left:124px;top:352px;width:3px;height:1px;background:#111;"></div>
<div style="position:absolute;left:124px;top:491px;width:3px;height:1px;background:#111;"></div>
<div style="position:absolute;left:127px;top:200px;width:1224px;height:292px;background:#e9ebfb;"></div>
<div style="position:absolute;left:127px;top:200px;width:19px;height:292px;background:#c3c3c7;"></div>
<div style="position:absolute;left:1307px;top:200px;width:44px;height:292px;background:#c3c3c7;"></div>
<div style="position:absolute;left:127px;top:200px;width:1224px;height:17px;background:linear-gradient(to bottom,#e6e6ea 0,#dadade 2px,#dfdfe3 100%);"></div>
<span class="t" style="left:133.0px;top:200.1px;font-size:12px;line-height:17px;color:#111;transform:scaleX(1.0287);transform-origin:0 50%;">2021_12_11 10-55-50 Dave &nbsp;Johnson &nbsp;&amp; Rick Broida</span>
<div style="position:absolute;left:127px;top:353px;width:1224px;height:1px;background:#101018;"></div>
<svg style="left:0;top:0" width="1370" height="500" viewBox="0 0 1370 500" shape-rendering="crispEdges"><path d="M127 285H1351M127 423H1351" stroke="#3a3aa2" stroke-width="2" fill="none"/><path d="M170.5 281.0V287.9M192.5 264.1V311.3M193.5 265.0V300.0M194.5 251.9V319.6M195.5 265.2V308.0M196.5 218.0V325.0M197.5 245.0V321.0M198.5 271.5V308.4M199.5 237.0V328.0M200.5 243.0V325.0M201.5 255.0V315.0M202.5 251.7V302.0M203.5 218.0V352.0M204.5 225.0V335.0M205.5 218.0V338.0M206.5 255.0V315.0M207.5 282.9V287.0M208.5 283.6V286.2M209.5 283.0V286.3M210.5 283.5V286.6M211.5 283.8V286.9M212.5 283.3V287.3M213.5 283.3V286.9M214.5 283.5V286.6M215.5 283.9V286.0M216.5 283.2V286.8M222.5 281.3V288.4M223.5 271.0V303.0M224.5 280.9V288.2M225.5 278.9V289.6M226.5 259.0V305.0M227.5 271.0V297.0M228.5 279.4V289.0M229.5 277.0V293.0M230.5 280.6V289.1M231.5 267.0V299.0M232.5 246.0V330.0M233.5 270.0V297.0M248.5 273.0V292.8M249.5 272.0V295.0M250.5 273.0V295.0M251.5 272.5V292.3M332.5 254.0V307.0M333.5 259.0V305.0M334.5 264.6V296.2M335.5 274.8V295.9M336.5 267.5V297.7M337.5 278.4V291.2M338.5 239.0V319.0M339.5 261.0V305.0M340.5 273.5V294.0M341.5 264.1V295.3M342.5 268.3V297.6M343.5 274.6V298.5M344.5 236.0V309.0M345.5 261.0V303.0M346.5 274.5V298.7M347.5 273.5V297.7M348.5 271.9V296.4M349.5 262.4V301.8M350.5 272.6V300.9M351.5 275.9V293.9M352.5 271.1V294.9M353.5 275.4V301.2M354.5 272.6V295.7M355.5 264.4V297.0M356.5 271.0V294.1M357.5 263.0V299.0M358.5 276.2V296.5M359.5 278.1V292.7M361.5 265.9V298.8M362.5 263.0V310.0M363.5 270.2V303.1M366.5 271.7V295.0M367.5 273.0V295.0M368.5 277.0V291.0M372.5 276.7V295.9M373.5 271.0V295.0M374.5 270.6V293.7M376.5 277.4V300.1M377.5 269.0V300.0M378.5 275.5V297.8M380.5 274.2V292.5M381.5 277.8V295.3M382.5 279.2V291.3M383.5 277.1V293.7M384.5 279.3V288.9M385.5 275.1V290.1M386.5 279.6V291.5M387.5 275.8V290.6M388.5 277.6V293.0M389.5 274.6V291.2M390.5 276.8V295.8M391.5 273.9V293.1M392.5 277.9V290.9M393.5 280.1V288.9M394.5 279.8V295.1M395.5 274.0V296.7M396.5 278.9V294.9M397.5 275.2V295.6M398.5 277.0V296.8M399.5 267.0V299.0M400.5 280.5V291.3M401.5 273.7V294.9M402.5 272.8V296.9M403.5 276.2V295.3M404.5 272.1V296.4M405.5 276.3V295.3M406.5 274.1V293.1M407.5 276.9V291.0M408.5 279.0V290.5M409.5 268.0V299.0M410.5 279.6V293.1M411.5 272.4V295.6M412.5 273.6V292.9M419.5 271.7V300.2M420.5 258.0V307.0M421.5 275.7V299.4M422.5 276.3V298.0M423.5 272.3V294.9M424.5 273.0V298.3M425.5 276.5V290.9M426.5 268.0V298.0M427.5 277.9V293.8M428.5 280.0V289.4M429.5 275.1V292.7M430.5 276.3V295.8M431.5 276.3V295.4M432.5 276.8V294.3M433.5 271.3V298.3M434.5 270.9V293.9M435.5 274.2V292.9M436.5 278.6V293.2M437.5 275.5V293.7M438.5 277.3V293.2M439.5 258.0V301.0M440.5 267.0V299.0M441.5 276.3V292.1M442.5 274.5V293.2M443.5 276.6V294.2M444.5 273.5V294.5M445.5 276.9V296.0M446.5 273.7V292.2M447.5 281.0V288.4M448.5 274.8V289.5M449.5 274.1V293.9M450.5 276.3V296.6M451.5 278.3V292.0M452.5 274.4V291.2M453.5 271.5V292.7M454.5 270.0V297.0M455.5 278.7V290.1M456.5 277.2V291.2M457.5 277.2V292.2M458.5 274.1V295.9M459.5 273.6V291.9M460.5 274.5V292.2M461.5 278.3V294.8M462.5 272.3V292.3M463.5 276.6V293.2M464.5 274.2V293.6M465.5 276.4V293.6M466.5 279.5V291.7M467.5 274.2V290.0M468.5 272.2V295.2M469.5 270.0V298.0M470.5 277.3V294.6M471.5 272.9V298.2M472.5 275.5V295.2M473.5 272.3V296.0M474.5 273.4V292.5M475.5 277.6V289.6M476.5 276.2V293.5M477.5 274.9V294.7M478.5 277.2V297.2M479.5 269.0V295.0M480.5 269.8V298.8M481.5 273.9V297.1M482.5 276.3V297.3M483.5 273.3V292.3M484.5 280.0V291.5M485.5 262.0V302.0M486.5 281.0V289.0M487.5 281.0V289.0M488.5 274.0V296.7M489.5 274.1V291.2M497.5 273.8V291.1M498.5 276.1V296.6M499.5 277.0V292.4M500.5 273.1V297.7M501.5 269.7V297.7M502.5 268.9V295.8M503.5 266.0V302.0M504.5 270.5V291.5M505.5 277.6V293.9M506.5 278.4V293.6M507.5 269.0V297.0M508.5 275.0V293.4M509.5 271.9V294.8M510.5 275.5V294.3M511.5 270.0V299.2M512.5 275.8V299.1M545.5 279.7V289.6M546.5 279.0V292.0M547.5 279.9V291.0M548.5 279.6V288.7M549.5 278.1V291.1M563.5 281.0V289.0M564.5 277.0V293.0M565.5 260.7V306.1M566.5 223.0V334.0M567.5 255.0V315.0M568.5 259.1V298.4M569.5 264.2V302.2M570.5 262.1V305.6M571.5 246.0V324.0M572.5 269.9V301.6M573.5 270.0V303.5M574.5 232.0V330.0M575.5 245.0V321.0M576.5 255.3V313.7M577.5 262.9V302.6M578.5 269.8V305.3M579.5 262.5V295.8M580.5 267.9V292.9M581.5 271.0V298.2M582.5 260.5V301.8M583.5 264.5V308.3M584.5 255.0V307.0M585.5 268.8V310.8M586.5 269.3V305.8M587.5 256.0V307.0M588.5 271.6V296.7M589.5 270.7V297.2M590.5 258.0V309.0M591.5 265.8V303.2M592.5 261.3V300.5M593.5 267.0V295.0M594.5 279.0V290.0M647.5 282.8V287.0M674.5 274.7V291.3M675.5 246.0V325.0M676.5 275.5V295.0M679.5 276.5V297.0M680.5 271.0V298.0M681.5 277.3V297.6M695.5 281.7V290.0M696.5 277.0V295.0M697.5 280.2V289.0M698.5 276.8V291.1M699.5 267.0V301.0M700.5 273.0V297.0M701.5 276.4V289.9M702.5 278.8V292.8M703.5 274.0V294.0M704.5 281.5V289.4M705.5 279.3V291.6M706.5 279.9V287.6M707.5 279.0V291.0M796.5 275.3V295.4M797.5 260.0V309.0M798.5 267.0V303.0M799.5 274.1V293.9M800.5 274.7V293.8M801.5 266.0V300.0M802.5 270.3V298.3M803.5 271.5V293.6M804.5 276.8V292.8M805.5 265.0V306.0M806.5 271.1V299.2M807.5 282.4V290.4M808.5 281.1V289.8M809.5 281.6V288.9M810.5 271.0V292.3M811.5 270.0V300.2M812.5 275.7V296.1M813.5 275.0V295.0M814.5 273.0V293.6M815.5 279.0V290.3M816.5 276.2V289.9M817.5 271.1V297.1M818.5 271.2V299.1M819.5 260.0V307.0M820.5 265.0V303.0M821.5 270.9V295.9M822.5 271.9V296.2M823.5 269.8V297.6M824.5 277.5V296.4M825.5 276.6V292.9M826.5 261.0V301.0M827.5 271.0V294.6M828.5 268.8V299.8M829.5 266.0V300.0M830.5 270.0V299.5M831.5 269.7V295.7M832.5 271.2V292.1M833.5 276.0V294.3M834.5 267.0V301.0M835.5 279.9V291.8M836.5 273.5V295.5M837.5 275.8V299.7M838.5 270.7V295.1M839.5 270.0V297.0M840.5 270.5V297.5M841.5 272.4V295.3M842.5 269.3V296.5M843.5 273.9V295.7M844.5 275.4V289.0M845.5 274.8V295.2M846.5 270.0V298.0M847.5 275.2V295.3M1129.5 277.8V290.4M1130.5 254.0V306.0M1131.5 278.6V295.6M1163.5 267.2V296.7M1164.5 265.8V298.1M1165.5 267.5V292.9M1166.5 253.0V313.0M1167.5 261.0V307.0M1168.5 272.4V297.1M1169.5 278.7V296.4M1170.5 263.0V302.0M1171.5 277.5V293.7M1172.5 276.1V295.3M1173.5 270.6V292.3M1174.5 266.2V296.1M1175.5 270.7V297.9M1176.5 254.0V305.0M1177.5 273.6V294.0M1178.5 272.3V295.2M1179.5 277.3V294.4M1180.5 277.8V289.5M1181.5 270.0V297.0M1182.5 275.1V291.7M1183.5 266.0V304.0M1184.5 274.9V299.4M1185.5 272.3V300.7M1186.5 268.9V292.4M1187.5 267.7V299.4M1188.5 263.0V304.0M1189.5 279.3V294.8M1190.5 276.3V292.8M1191.5 281.0V289.0M1194.5 277.5V293.0M1195.5 275.1V291.6M1196.5 272.3V294.2M1197.5 274.5V290.4M1198.5 274.1V292.7M1199.5 277.4V290.1M1200.5 275.0V290.5M1201.5 276.1V293.4M1202.5 276.7V290.6M1203.5 270.0V296.0M1204.5 278.3V289.7M1205.5 277.5V290.0M1206.5 274.5V293.2M1207.5 274.9V290.4M1208.5 278.6V294.7M1209.5 273.0V293.6M1210.5 276.2V291.5M1211.5 270.0V297.0M1212.5 273.8V293.2M1213.5 275.1V293.2M1214.5 283.4V287.8M1215.5 282.3V287.6M1216.5 283.7V286.3M1217.5 283.4V286.9M1218.5 282.8V286.4M1219.5 278.3V296.4M1220.5 243.0V331.0M1221.5 274.6V296.0M1226.5 279.0V291.0M1227.5 270.2V300.2M1228.5 247.0V322.0M1229.5 257.0V311.0M1230.5 262.6V306.4M1231.5 273.9V295.5M1232.5 237.0V325.0M1233.5 255.0V313.0M1234.5 265.6V300.4M1235.5 263.2V297.4M1236.5 266.8V299.1M1237.5 257.0V311.0M1238.5 260.4V300.9M1239.5 264.2V308.2M1240.5 270.8V300.4M1241.5 268.9V301.1M1242.5 273.2V295.1M1243.5 274.2V303.6M1244.5 243.0V315.0M1245.5 261.0V307.0M1246.5 271.7V297.0M1247.5 264.4V302.4M1248.5 270.3V291.7M1249.5 275.2V297.2M1250.5 276.4V294.3M1251.5 267.0V299.0M1252.5 270.5V297.0M1253.5 275.6V291.9M1254.5 276.2V295.0M1255.5 277.9V289.7M1256.5 264.0V301.0M1257.5 273.0V294.2M1258.5 269.5V298.3M1259.5 268.4V295.0M1260.5 268.9V294.2M1261.5 273.9V295.1M1262.5 268.0V299.0M1263.5 275.6V293.9M1264.5 275.5V293.0M1265.5 276.8V291.9M1266.5 272.0V295.1M1267.5 275.8V292.1M1268.5 220.0V313.0M1269.5 265.0V303.0M1270.5 274.9V300.3M1271.5 266.7V295.7M1272.5 269.0V299.0M1273.5 277.3V296.7M1274.5 274.2V295.3M1275.5 274.8V292.7M1276.5 273.8V297.4M1277.5 279.6V290.0M1278.5 272.6V297.8M1279.5 259.0V305.0M1280.5 265.0V303.0M1281.5 275.3V299.9M1282.5 274.3V301.7M1283.5 268.2V296.1M1284.5 273.7V301.5M1285.5 267.0V303.0M1286.5 272.2V299.2M1287.5 275.1V293.8M1288.5 273.7V293.7M1289.5 274.7V294.9M1290.5 270.7V298.3M1291.5 253.0V309.0M1292.5 263.0V305.0M1293.5 265.1V297.9M1294.5 266.1V300.8M1295.5 266.3V302.0M1296.5 274.7V291.5M1297.5 278.4V290.9M1298.5 269.0V297.0M1299.5 277.3V289.5M1300.5 278.2V289.1M1301.5 275.0V293.0M1302.5 277.0V291.0M1303.5 281.0V289.0M127.5 411.1V429.0M128.5 409.0V437.0M129.5 416.7V428.5M130.5 407.0V438.0M131.5 413.9V429.2M132.5 415.6V432.4M133.5 414.8V433.1M134.5 416.3V430.3M135.5 419.0V427.0M139.5 415.0V433.1M140.5 389.0V460.0M141.5 403.0V445.0M142.5 411.4V432.0M143.5 406.1V438.8M144.5 393.0V453.0M145.5 390.0V458.0M146.5 403.0V443.0M147.5 409.3V437.3M148.5 417.0V429.0M152.5 406.1V437.3M153.5 400.0V452.0M154.5 403.0V447.0M155.5 408.2V441.1M157.5 408.3V443.0M158.5 407.2V439.0M159.5 407.7V434.6M160.5 403.0V447.0M161.5 416.0V432.2M162.5 396.0V453.0M163.5 401.0V448.0M164.5 405.5V435.0M165.5 412.7V434.4M166.5 401.0V445.0M167.5 413.9V436.4M168.5 409.1V441.7M169.5 413.4V434.3M170.5 411.0V435.1M171.5 416.2V429.9M172.5 415.4V431.6M173.5 413.0V430.4M174.5 413.1V438.0M175.5 411.7V439.8M176.5 406.0V448.0M177.5 415.0V440.8M178.5 408.0V441.0M179.5 417.1V433.1M180.5 418.4V433.9M181.5 410.4V435.6M182.5 383.0V458.0M183.5 399.0V443.0M184.5 411.8V436.8M185.5 410.5V431.3M186.5 409.7V430.9M187.5 416.6V428.1M188.5 416.4V427.7M189.5 413.4V431.8M190.5 416.3V428.4M191.5 413.0V429.6M192.5 410.5V439.5M193.5 391.0V471.0M194.5 395.0V453.0M195.5 403.2V439.1M196.5 411.1V443.1M197.5 408.5V440.2M198.5 398.0V457.0M199.5 399.0V451.0M200.5 407.4V437.2M201.5 399.0V445.0M202.5 404.8V445.4M208.5 417.3V430.0M209.5 403.0V443.0M210.5 415.6V430.0M211.5 405.0V449.0M212.5 414.5V434.4M213.5 417.0V433.7M214.5 413.0V435.0M215.5 418.0V428.0M218.5 413.0V435.0M219.5 410.5V434.0M220.5 409.4V432.3M221.5 394.0V463.0M222.5 403.0V451.0M223.5 414.9V434.2M224.5 403.0V455.0M225.5 417.4V433.4M226.5 414.7V434.5M227.5 411.9V431.0M228.5 399.0V458.0M229.5 405.0V445.0M230.5 417.0V429.0M237.5 418.0V433.4M238.5 413.0V434.0M239.5 417.7V432.2M240.5 417.8V430.7M247.5 414.6V431.0M248.5 414.0V432.0M249.5 414.0V433.0M250.5 414.8V432.0M251.5 416.8V434.0M252.5 414.0V434.0M253.5 419.4V430.9M254.5 401.2V447.9M255.5 389.0V464.0M256.5 393.0V461.0M257.5 395.0V459.0M258.5 406.4V438.6M259.5 397.0V458.0M260.5 413.8V434.6M261.5 413.2V442.5M262.5 410.7V438.7M263.5 389.0V463.0M264.5 393.0V459.0M265.5 406.4V450.2M266.5 405.0V435.0M267.5 405.6V445.6M268.5 418.5V428.7M269.5 417.8V432.1M270.5 414.8V429.2M271.5 414.0V430.1M272.5 412.6V433.4M273.5 408.0V437.0M274.5 410.7V431.5M275.5 411.9V430.6M276.5 413.0V431.8M277.5 405.0V449.0M278.5 418.1V433.6M279.5 415.6V431.8M280.5 397.0V451.0M281.5 415.8V437.0M282.5 416.5V435.7M283.5 414.8V434.3M284.5 408.0V437.0M285.5 418.4V427.0M286.5 413.3V432.0M287.5 416.6V436.3M288.5 415.1V438.0M289.5 413.3V440.2M290.5 405.0V443.0M291.5 409.4V440.5M292.5 408.6V440.7M293.5 406.8V438.0M294.5 401.0V448.0M295.5 411.9V432.6M296.5 417.2V429.0M297.5 411.2V430.5M298.5 393.0V457.0M299.5 411.5V434.2M300.5 408.5V437.5M301.5 403.0V445.0M302.5 405.0V437.2M303.5 410.7V439.6M304.5 406.0V449.2M305.5 379.0V463.0M306.5 387.0V461.0M307.5 420.9V425.7M308.5 419.3V426.8M309.5 421.1V425.7M310.5 419.5V426.6M311.5 411.1V432.0M312.5 412.5V435.5M313.5 407.0V439.0M314.5 410.6V434.3M315.5 416.0V429.4M316.5 398.0V452.0M317.5 413.8V436.2M318.5 411.5V432.5M319.5 407.0V437.5M320.5 395.0V453.0M321.5 405.0V443.0M322.5 406.4V436.4M323.5 411.0V434.1M324.5 401.0V453.0M325.5 415.3V433.2M326.5 409.7V434.7M327.5 398.0V455.0M328.5 403.0V449.0M329.5 410.8V432.0M330.5 415.0V431.0M890.5 407.0V435.5M891.5 411.1V442.1M892.5 393.0V457.0M893.5 395.4V449.2M894.5 400.0V447.6M895.5 407.6V438.2M896.5 390.0V461.0M897.5 406.4V434.0M898.5 409.5V437.0M899.5 410.1V432.6M900.5 413.0V439.5M901.5 395.0V453.0M902.5 409.6V446.0M903.5 406.3V446.7M904.5 399.0V446.9M905.5 393.0V463.0M906.5 403.5V438.9M907.5 407.4V449.9M908.5 410.1V437.4M909.5 391.0V459.0M910.5 411.4V436.3M911.5 404.7V436.6M912.5 399.7V434.5M913.5 400.2V444.5M914.5 389.0V457.0M915.5 395.0V453.0M916.5 396.8V438.8M917.5 413.0V433.0M922.5 407.1V435.4M923.5 399.0V461.0M924.5 401.0V459.0M925.5 404.3V447.8M926.5 413.4V445.7M927.5 406.9V439.5M928.5 405.7V438.1M929.5 411.4V433.1M930.5 407.0V441.0M931.5 414.8V434.6M932.5 411.3V437.7M933.5 413.8V438.5M934.5 405.0V443.0M935.5 407.7V432.1M936.5 407.9V432.6M937.5 415.0V430.3M938.5 408.0V439.0M939.5 412.2V430.4M940.5 407.0V430.5M941.5 407.2V439.5M942.5 409.3V437.8M943.5 407.5V437.9M944.5 401.0V454.0M945.5 416.7V434.8M946.5 415.5V432.7M947.5 412.0V438.5M948.5 411.5V440.1M949.5 409.0V437.0M950.5 414.5V434.8M951.5 409.6V436.8M952.5 410.5V431.2M953.5 414.5V432.1M954.5 415.8V430.7M955.5 394.0V462.0M956.5 399.0V453.0M957.5 409.2V442.3M958.5 409.6V435.5M959.5 412.2V437.5M960.5 407.0V443.0M961.5 413.8V433.1M962.5 410.9V439.3M963.5 407.4V440.2M964.5 403.0V451.0M965.5 412.7V437.7M966.5 408.6V437.5M967.5 410.2V436.5M968.5 407.0V443.0M969.5 415.6V434.4M970.5 412.2V433.0M971.5 410.1V442.3M973.5 408.6V444.5M974.5 395.0V467.0M975.5 396.0V465.0M976.5 397.0V463.0M977.5 399.5V446.2M978.5 419.0V426.2M979.5 417.6V430.0M980.5 416.9V428.9M981.5 419.4V428.2M982.5 384.0V463.0M983.5 387.0V461.0M984.5 409.8V432.9M985.5 401.8V437.2M986.5 399.0V449.0M987.5 401.8V442.3M988.5 401.0V447.0M989.5 401.6V439.9M990.5 411.9V440.2M993.5 413.4V436.7M994.5 412.7V438.8M995.5 414.2V441.1M996.5 406.8V431.6M997.5 408.1V439.5M998.5 389.0V458.0M999.5 412.3V430.4M1000.5 405.0V443.0M1001.5 413.4V434.5M1002.5 412.1V438.8M1004.5 406.9V433.0M1005.5 412.9V437.3M1006.5 393.0V456.0M1007.5 403.0V447.0M1008.5 410.8V442.1M1014.5 418.6V428.4M1015.5 403.0V456.0M1016.5 419.3V427.8M1018.5 411.9V433.0M1019.5 415.6V434.4M1020.5 413.7V430.9M1021.5 413.7V431.9M1022.5 405.0V443.0M1023.5 403.0V447.0M1024.5 408.3V437.4M1025.5 409.3V439.6M1026.5 412.5V432.5M1027.5 408.9V433.9M1028.5 395.0V456.0M1029.5 403.0V445.0M1030.5 407.7V434.2M1031.5 410.7V431.1M1032.5 418.4V431.0M1033.5 412.3V431.0M1034.5 408.3V439.2M1035.5 409.1V441.0M1036.5 391.0V459.0M1037.5 403.0V443.0M1038.5 405.3V432.9M1039.5 408.6V438.6M1040.5 409.9V433.4M1041.5 390.0V461.0M1042.5 395.0V453.0M1043.5 413.4V433.7M1044.5 409.0V430.5M1045.5 412.1V434.1M1046.5 407.0V441.0M1047.5 407.0V432.7M1048.5 414.7V432.5M1049.5 414.6V435.4M1050.5 408.7V433.5M1051.5 396.0V449.0M1052.5 405.0V441.0M1053.5 416.7V434.4M1054.5 413.5V435.4M1055.5 422.0V424.0M1056.5 421.9V424.1M1057.5 421.7V424.1M1058.5 422.0V424.0M1059.5 421.8V424.2M1060.5 421.8V424.2M1062.5 407.0V447.0M1063.5 401.0V449.0M1064.5 409.0V431.6M1065.5 411.9V437.4M1066.5 410.2V436.2M1067.5 384.0V460.0M1068.5 399.0V447.0M1069.5 411.9V432.8M1070.5 406.2V438.5M1071.5 412.8V432.2M1072.5 404.8V438.9M1073.5 413.4V443.8M1074.5 398.0V443.0M1075.5 409.4V439.5M1076.5 408.6V432.9M1077.5 413.0V430.8M1078.5 415.3V430.2M1079.5 410.9V430.3M1080.5 405.0V441.0M1081.5 413.3V435.4M1082.5 414.9V436.4M1083.5 403.9V442.3M1084.5 401.0V453.0M1085.5 412.9V441.4M1086.5 398.0V460.0M1087.5 401.0V455.0M1088.5 415.1V431.6M1089.5 414.5V429.9M1090.5 409.0V441.0M1091.5 414.4V431.1M1092.5 413.7V433.2M1095.5 409.3V433.9M1096.5 405.0V447.0M1097.5 412.5V428.7M1098.5 413.3V436.7M1099.5 415.1V435.6M1100.5 405.0V445.0M1101.5 409.9V439.0M1102.5 405.6V434.2M1103.5 402.3V436.9M1104.5 403.8V434.8M1105.5 387.0V470.0M1106.5 389.0V467.0M1107.5 393.0V463.0M1108.5 389.0V459.0M1109.5 416.7V430.5M1110.5 401.0V447.0M1111.5 414.0V434.4M1112.5 412.5V433.5M1113.5 403.1V439.9M1114.5 386.0V450.0M1115.5 403.0V443.0M1116.5 407.5V439.6M1117.5 404.6V433.0M1118.5 401.0V453.0M1119.5 415.5V437.2M1120.5 417.3V433.0M1121.5 384.0V458.0M1122.5 399.0V451.0M1123.5 407.5V442.1M1124.5 413.9V437.8M1125.5 395.0V458.0M1126.5 409.4V441.1M1127.5 413.1V443.2M1128.5 397.0V457.0M1129.5 403.6V438.7M1130.5 408.5V440.2M1131.5 409.2V437.5M1132.5 401.0V453.0M1133.5 405.0V443.0M1134.5 409.9V432.5M1135.5 405.0V442.7M1136.5 409.0V435.0M1137.5 404.5V437.4M1138.5 413.0V431.0M1139.5 401.5V441.2M1140.5 420.7V425.4M1141.5 419.0V424.9M1142.5 419.1V425.8M1143.5 390.0V449.0M1144.5 409.8V430.8M1146.5 418.3V428.6M1147.5 419.1V426.8M1148.5 417.8V426.2M1149.5 419.9V426.5M1150.5 420.2V428.2M1151.5 416.2V426.2M1152.5 415.8V427.3M1153.5 415.9V426.9M1154.5 416.0V430.9M1155.5 418.7V426.9M1156.5 419.1V428.7M1157.5 409.8V434.9M1158.5 401.0V446.0M1159.5 409.3V436.8M1160.5 421.8V424.4M1161.5 421.0V424.6M1162.5 421.5V424.8M1163.5 421.2V425.5M1164.5 421.3V424.7M1165.5 421.6V424.0M1166.5 406.0V435.1M1167.5 408.6V431.6M1168.5 401.0V443.0M1169.5 409.9V437.0M1170.5 395.0V448.0M1171.5 399.0V445.0M1172.5 409.6V435.1M1173.5 403.0V445.0M1174.5 414.4V434.1M1175.5 418.0V428.0M1302.5 418.4V426.5M1303.5 414.0V431.0M1304.5 417.8V425.5M1307.5 411.6V436.4M1308.5 417.3V430.7M1309.5 407.0V445.0M1310.5 418.7V434.6M1311.5 412.9V433.4M1312.5 405.0V457.0M1313.5 409.0V449.0M1314.5 403.0V443.0M1315.5 415.3V437.5M1316.5 415.9V436.4M1317.5 407.0V447.0M1318.5 416.6V431.8M1319.5 417.0V429.0M1320.5 419.1V427.7M1321.5 417.6V425.9M1322.5 420.2V425.7M1323.5 420.4V426.0M1324.5 415.0V431.0M1325.5 417.5V426.2M1326.5 413.0V431.0M1327.5 417.2V427.7M1328.5 406.8V435.5M1329.5 408.1V437.1M1330.5 408.7V437.1M1331.5 387.0V471.0M1332.5 391.0V467.0M1333.5 395.0V453.0M1334.5 409.2V446.3M1335.5 393.0V459.0M1336.5 411.1V434.0M1337.5 387.0V463.0M1338.5 389.0V461.0M1339.5 413.7V440.3M1340.5 403.0V449.0M1341.5 417.1V434.7M1342.5 415.1V434.1M1343.5 407.9V432.5M1344.5 401.0V451.0M1345.5 399.0V443.0M1346.5 407.9V448.2M1347.5 404.5V439.0M1348.5 405.0V441.0M1349.5 405.6V438.6M1350.5 408.0V438.0" stroke="#3a3ab6" stroke-width="1" fill="none"/><path d="M192.5 277.5V293.6M193.5 278.6V289.8M194.5 278.3V291.7M195.5 280.2V290.6M196.5 274.8V295.2M197.5 275.8V294.2M198.5 280.3V293.1M199.5 277.6V292.4M200.5 278.6V291.4M201.5 274.2V295.8M202.5 275.2V292.0M203.5 276.1V293.9M204.5 277.0V293.0M205.5 277.9V292.1M206.5 278.9V291.1M223.5 281.4V289.6M224.5 283.2V286.4M225.5 282.6V286.8M226.5 276.4V292.2M227.5 280.5V288.8M228.5 283.4V286.1M229.5 283.1V286.9M230.5 283.2V286.7M231.5 278.1V290.4M232.5 276.7V293.3M233.5 280.4V288.7M248.5 280.4V288.0M249.5 280.5V288.5M250.5 281.3V288.1M251.5 281.7V287.0M332.5 274.8V294.3M333.5 275.8V292.7M334.5 278.0V288.9M335.5 281.9V288.3M336.5 280.3V288.4M337.5 282.1V287.8M338.5 275.2V294.8M339.5 276.1V292.4M340.5 281.2V288.0M341.5 278.9V288.0M342.5 280.8V288.2M343.5 280.5V290.9M344.5 275.5V294.5M345.5 276.4V291.5M346.5 281.6V289.4M347.5 281.8V288.6M348.5 281.8V287.8M349.5 275.4V292.1M350.5 280.2V291.1M351.5 281.9V288.1M352.5 280.7V288.0M353.5 282.4V289.3M354.5 279.4V289.8M355.5 276.5V289.9M356.5 279.8V288.4M357.5 277.7V289.7M358.5 282.4V288.4M359.5 283.2V287.0M361.5 277.4V290.5M362.5 277.1V293.6M363.5 280.3V290.8M366.5 279.4V289.2M367.5 280.4V288.8M368.5 282.2V287.1M372.5 281.6V289.5M373.5 279.8V288.7M374.5 280.2V287.9M376.5 283.1V288.8M377.5 278.0V291.5M378.5 281.2V290.1M380.5 281.6V287.4M381.5 283.0V287.9M383.5 281.7V288.7M384.5 282.8V286.5M385.5 281.6V286.8M386.5 283.3V287.0M387.5 282.5V286.5M388.5 281.7V288.6M389.5 280.7V287.6M390.5 282.0V289.0M391.5 281.3V287.7M392.5 282.9V286.7M394.5 282.7V289.4M395.5 280.6V289.6M396.5 282.8V288.6M397.5 281.9V288.4M398.5 282.7V288.3M399.5 280.6V288.4M400.5 283.1V287.7M401.5 280.7V288.8M402.5 280.8V289.1M403.5 282.3V288.2M404.5 281.5V288.1M405.5 281.1V289.6M406.5 280.5V288.3M407.5 282.0V287.2M408.5 283.0V286.8M409.5 280.0V289.1M411.5 279.5V289.6M412.5 280.5V288.1M419.5 280.4V290.3M420.5 277.6V291.7M421.5 282.5V288.9M422.5 281.1V290.8M423.5 279.8V289.1M424.5 280.6V289.9M425.5 282.2V286.9M426.5 280.0V288.8M427.5 283.2V287.2M428.5 282.8V286.9M429.5 281.1V288.1M430.5 281.9V288.9M431.5 282.2V288.3M432.5 282.7V287.6M433.5 281.7V288.2M434.5 279.0V288.8M435.5 280.8V288.0M436.5 282.8V287.8M437.5 282.1V287.7M438.5 282.9V287.2M439.5 274.2V292.2M440.5 277.6V290.7M441.5 281.8V287.6M442.5 281.5V287.7M443.5 282.5V287.7M444.5 282.1V287.4M445.5 281.5V289.8M446.5 280.5V287.8M448.5 281.7V286.4M449.5 281.9V287.5M450.5 282.9V287.8M451.5 282.2V288.0M452.5 280.9V287.4M453.5 280.3V287.7M454.5 280.4V288.7M455.5 283.3V286.4M456.5 281.5V287.8M457.5 281.8V288.0M458.5 280.9V289.1M459.5 281.2V287.3M460.5 281.9V287.1M461.5 283.3V287.5M462.5 279.4V288.2M463.5 281.6V288.3M464.5 281.1V288.1M465.5 282.3V287.8M466.5 283.5V286.9M467.5 282.4V286.2M468.5 279.6V289.3M469.5 279.2V290.0M470.5 282.3V288.3M471.5 281.3V289.1M472.5 282.4V287.7M473.5 279.3V289.9M474.5 280.3V288.1M475.5 282.2V286.7M476.5 282.1V287.8M477.5 282.0V287.8M478.5 283.0V288.1M479.5 278.0V289.4M480.5 278.9V290.5M481.5 281.0V289.3M482.5 282.2V288.9M483.5 281.7V287.0M485.5 275.3V292.2M486.5 283.5V286.5M488.5 281.6V288.6M489.5 282.1V286.7M497.5 280.6V287.4M498.5 281.8V289.2M499.5 282.4V287.4M500.5 281.7V288.6M501.5 281.3V288.1M502.5 278.2V289.6M503.5 277.7V291.5M504.5 280.0V287.3M505.5 282.7V287.7M506.5 283.2V287.3M507.5 277.8V290.4M508.5 280.9V288.4M509.5 280.1V288.7M510.5 281.8V288.1M511.5 280.6V289.2M512.5 282.7V288.6M545.5 283.4V286.3M546.5 283.5V286.8M547.5 282.8V287.6M548.5 282.8V286.5M549.5 282.5V287.2M564.5 281.5V288.5M565.5 275.5V293.4M566.5 276.4V293.6M567.5 277.3V292.7M568.5 278.3V288.8M569.5 280.0V289.2M570.5 275.3V293.7M571.5 275.8V294.2M572.5 279.8V290.7M573.5 280.4V290.7M574.5 278.6V291.4M575.5 274.2V295.8M576.5 275.2V294.8M577.5 276.8V291.5M578.5 279.9V291.7M579.5 278.4V288.2M580.5 280.6V287.0M581.5 278.9V290.8M582.5 275.5V291.7M583.5 277.7V293.3M584.5 277.3V292.0M585.5 280.4V291.7M586.5 281.2V290.0M587.5 274.8V294.3M588.5 279.8V289.5M589.5 280.0V289.2M590.5 277.6V292.4M591.5 279.9V289.9M592.5 274.4V291.9M593.5 277.6V289.1M594.5 282.8V286.9M674.5 281.4V287.2M675.5 277.6V292.4M676.5 282.4V287.7M679.5 281.8V289.5M680.5 280.3V289.3M681.5 282.7V288.7M696.5 282.0V288.7M697.5 283.4V286.3M698.5 282.6V286.8M699.5 280.4V289.1M700.5 279.8V290.2M701.5 281.6V286.9M702.5 282.8V287.8M703.5 281.5V287.9M706.5 282.8V286.1M707.5 282.7V287.3M796.5 280.6V289.7M797.5 275.2V294.8M798.5 278.3V291.7M799.5 281.4V288.0M800.5 282.0V287.6M801.5 280.2V288.8M802.5 278.6V290.8M803.5 279.6V288.4M804.5 282.1V287.8M805.5 278.6V291.7M806.5 281.1V289.0M808.5 283.4V287.1M810.5 280.2V287.5M811.5 280.4V289.7M812.5 282.5V288.0M813.5 280.5V289.5M814.5 280.1V288.5M815.5 282.8V287.0M816.5 282.1V286.6M817.5 280.9V288.6M818.5 281.5V288.6M819.5 274.5V294.6M820.5 277.1V292.2M821.5 279.9V288.9M822.5 280.8V288.6M823.5 280.7V288.5M824.5 283.2V287.8M825.5 281.4V288.4M826.5 275.8V291.1M827.5 280.2V288.3M828.5 280.0V289.5M829.5 279.9V289.0M830.5 278.3V291.5M831.5 278.7V289.4M832.5 279.9V287.6M833.5 282.0V288.1M834.5 279.7V289.7M836.5 280.0V289.6M837.5 281.3V290.8M838.5 279.9V288.6M839.5 280.2V288.8M840.5 280.9V288.5M841.5 282.0V287.5M842.5 278.4V289.9M843.5 280.7V289.1M844.5 281.7V286.4M845.5 281.9V288.1M846.5 281.0V288.5M847.5 280.6V289.6M1129.5 283.0V286.5M1130.5 279.2V290.1M1131.5 282.3V289.5M1163.5 280.0V288.3M1164.5 280.4V288.2M1165.5 277.6V288.4M1166.5 275.8V294.2M1167.5 276.7V292.6M1168.5 281.1V288.7M1169.5 283.3V288.1M1170.5 275.1V292.6M1171.5 281.9V288.6M1172.5 281.7V288.8M1173.5 280.2V287.4M1174.5 279.5V288.3M1175.5 281.4V288.3M1176.5 274.5V293.7M1177.5 280.5V288.6M1178.5 280.4V288.7M1179.5 282.5V288.0M1180.5 283.0V286.3M1181.5 281.4V287.9M1182.5 280.8V287.9M1183.5 277.7V292.3M1184.5 281.5V290.0M1185.5 281.1V289.8M1186.5 280.7V287.0M1187.5 277.2V291.5M1188.5 276.0V292.8M1189.5 282.9V288.6M1190.5 282.1V287.6M1194.5 282.0V288.2M1195.5 281.4V287.4M1196.5 280.9V287.9M1197.5 282.1V286.5M1198.5 282.4V286.9M1199.5 281.8V287.2M1200.5 281.2V287.1M1201.5 281.9V287.9M1202.5 282.5V286.7M1203.5 281.0V287.9M1204.5 282.0V287.1M1205.5 281.9V287.1M1206.5 281.1V288.0M1207.5 281.6V286.8M1208.5 283.1V287.9M1209.5 282.0V287.2M1210.5 281.1V287.8M1211.5 279.0V289.8M1212.5 281.0V287.9M1213.5 281.8V287.6M1219.5 282.9V288.5M1220.5 278.6V291.4M1221.5 280.3V290.0M1226.5 283.5V286.5M1227.5 278.6V291.6M1228.5 275.5V294.5M1229.5 276.4V293.6M1230.5 277.8V291.9M1231.5 281.9V288.0M1232.5 279.2V290.8M1233.5 274.8V295.2M1234.5 277.6V290.9M1235.5 277.5V289.3M1236.5 279.4V289.3M1237.5 278.6V291.4M1238.5 274.2V292.1M1239.5 276.5V294.5M1240.5 279.7V290.7M1241.5 279.7V290.4M1242.5 281.5V288.0M1243.5 282.3V289.7M1244.5 274.5V295.5M1245.5 275.5V293.7M1246.5 280.2V289.3M1247.5 278.4V290.6M1248.5 280.9V286.9M1249.5 282.6V287.9M1250.5 281.3V288.9M1251.5 278.1V290.4M1252.5 280.0V289.2M1253.5 282.1V287.1M1254.5 282.6V287.7M1255.5 281.8V287.1M1256.5 276.4V291.6M1257.5 280.5V288.4M1258.5 279.9V289.4M1259.5 280.1V287.9M1260.5 280.9V287.4M1261.5 280.2V289.4M1262.5 278.3V290.6M1263.5 281.6V288.2M1264.5 282.0V287.6M1265.5 282.7V286.9M1266.5 281.8V287.4M1267.5 281.1V288.0M1268.5 275.8V294.2M1269.5 278.1V291.2M1270.5 281.9V289.7M1271.5 280.1V287.9M1272.5 277.8V291.3M1273.5 281.8V289.8M1274.5 281.0V288.8M1275.5 281.6V287.6M1276.5 281.7V288.6M1278.5 279.6V290.6M1279.5 275.5V292.9M1280.5 277.8V291.5M1281.5 281.9V289.8M1282.5 282.0V289.7M1283.5 280.9V287.7M1284.5 280.2V292.0M1285.5 278.1V291.9M1286.5 280.6V289.9M1287.5 282.0V287.7M1288.5 282.0V287.3M1289.5 280.4V289.5M1290.5 279.1V290.4M1291.5 276.1V293.9M1292.5 277.7V291.7M1293.5 279.2V288.8M1294.5 280.2V289.0M1295.5 276.8V292.4M1296.5 280.9V287.6M1297.5 282.6V287.1M1298.5 279.9V288.8M1299.5 282.8V286.3M1300.5 283.3V286.0M1301.5 280.8V288.4M1302.5 281.9V287.3M127.5 419.7V424.7M128.5 419.6V426.4M129.5 420.3V425.3M130.5 416.9V428.8M131.5 419.9V425.2M132.5 420.7V425.9M133.5 420.8V425.7M134.5 420.0V426.3M135.5 421.4V424.6M139.5 421.0V425.6M140.5 412.5V433.5M141.5 415.1V431.7M142.5 418.8V426.2M143.5 417.6V428.0M144.5 416.3V429.7M145.5 417.2V428.8M146.5 414.5V431.5M147.5 417.7V428.5M148.5 420.9V425.1M152.5 416.1V428.9M153.5 414.5V431.9M154.5 416.3V431.0M155.5 418.7V428.3M157.5 416.6V431.7M158.5 416.7V429.4M159.5 417.5V427.2M160.5 416.6V430.7M161.5 421.0V425.6M162.5 417.2V428.8M163.5 413.7V433.2M164.5 416.3V427.6M165.5 419.5V426.9M166.5 416.3V429.7M167.5 420.6V426.6M168.5 416.8V431.4M169.5 419.1V427.6M170.5 418.5V427.5M171.5 420.7V425.3M172.5 420.8V425.5M173.5 420.4V424.9M174.5 418.7V429.5M175.5 418.5V429.7M176.5 416.9V431.6M177.5 420.4V428.7M178.5 418.8V428.1M180.5 421.1V427.6M181.5 418.1V427.8M182.5 414.7V431.3M183.5 415.6V429.1M184.5 420.0V426.7M185.5 417.4V426.7M186.5 417.6V426.2M187.5 420.6V424.9M188.5 420.8V424.5M189.5 420.2V425.6M190.5 421.3V424.4M191.5 418.6V425.9M192.5 418.0V429.5M193.5 414.4V431.6M194.5 415.3V430.7M195.5 417.4V427.5M196.5 420.1V427.9M197.5 416.9V430.3M198.5 413.8V432.2M199.5 414.7V431.3M200.5 418.2V427.4M201.5 416.6V428.9M202.5 414.8V433.1M208.5 420.5V426.1M209.5 415.1V430.9M210.5 420.4V425.5M211.5 417.2V430.7M212.5 420.6V426.2M214.5 418.8V428.1M215.5 421.1V424.9M218.5 420.3V426.2M219.5 417.4V427.9M220.5 417.4V426.8M221.5 414.1V431.9M222.5 416.3V431.0M223.5 420.6V426.3M224.5 417.9V429.1M225.5 420.6V427.5M226.5 419.7V427.6M227.5 419.0V425.9M228.5 415.3V430.7M229.5 417.9V429.2M237.5 421.0V427.2M238.5 419.3V427.1M239.5 421.2V426.0M240.5 421.5V425.3M247.5 421.0V424.9M248.5 419.2V426.8M249.5 419.5V426.8M250.5 420.2V426.1M251.5 421.1V426.4M252.5 420.6V425.9M253.5 421.4V426.6M254.5 414.0V432.8M255.5 414.1V431.9M256.5 415.0V431.0M257.5 415.9V430.1M258.5 418.8V427.0M259.5 412.5V433.5M260.5 419.3V427.6M261.5 419.5V430.0M262.5 419.1V428.0M263.5 416.3V429.7M264.5 417.2V428.8M265.5 416.0V433.2M266.5 416.1V427.6M267.5 417.0V430.8M270.5 419.3V425.8M271.5 419.3V425.9M272.5 419.1V426.8M273.5 418.0V427.7M274.5 419.4V425.5M275.5 420.2V424.9M276.5 418.6V426.8M277.5 415.8V432.5M278.5 421.2V426.8M279.5 420.6V425.8M280.5 416.3V429.7M281.5 421.3V426.4M282.5 420.2V428.4M283.5 419.8V427.3M284.5 417.8V427.8M286.5 420.4V425.4M287.5 420.1V429.0M288.5 419.8V429.1M289.5 419.4V429.4M290.5 417.0V429.7M291.5 419.0V428.1M292.5 419.3V427.5M293.5 415.9V429.5M294.5 414.3V432.5M295.5 419.0V426.4M296.5 421.1V424.9M297.5 419.7V425.1M298.5 417.2V428.8M299.5 418.1V427.7M300.5 417.4V428.6M301.5 416.1V430.6M302.5 417.5V427.4M303.5 419.7V427.5M304.5 415.4V433.8M305.5 413.2V432.8M306.5 414.1V431.9M310.5 421.5V424.6M311.5 418.3V426.6M312.5 419.2V427.5M313.5 417.9V428.1M314.5 419.5V426.2M315.5 421.3V424.6M316.5 412.8V433.2M317.5 419.5V428.1M318.5 419.0V426.3M319.5 418.1V427.5M320.5 416.6V429.4M321.5 414.9V432.0M322.5 416.2V428.5M323.5 418.5V427.1M324.5 415.7V431.0M325.5 420.7V426.0M326.5 419.6V426.0M327.5 412.5V433.5M328.5 415.1V432.5M329.5 418.6V426.2M330.5 420.4V425.6M890.5 417.3V427.5M891.5 419.2V429.1M892.5 416.3V429.7M893.5 417.2V428.8M894.5 413.3V433.2M895.5 417.1V428.8M896.5 414.7V431.3M897.5 417.9V426.4M898.5 419.4V426.7M899.5 417.2V427.3M900.5 418.9V429.8M901.5 414.1V431.9M902.5 418.5V430.6M903.5 418.1V430.0M904.5 416.9V429.1M905.5 412.5V433.5M906.5 415.3V429.3M907.5 417.4V431.6M908.5 418.9V427.6M909.5 416.3V429.7M910.5 420.2V426.2M911.5 415.3V428.8M912.5 414.1V427.4M913.5 415.1V430.4M914.5 415.6V430.4M915.5 416.6V429.4M916.5 412.2V430.1M917.5 418.9V427.1M922.5 416.1V428.4M923.5 413.5V432.5M924.5 415.1V431.6M925.5 417.0V430.7M926.5 420.3V429.4M927.5 419.1V427.0M928.5 415.7V429.4M929.5 418.5V426.9M930.5 417.5V429.2M931.5 420.5V426.6M932.5 419.9V426.9M933.5 418.9V430.0M934.5 415.6V431.2M935.5 417.3V426.4M936.5 418.0V426.2M937.5 420.6V425.1M938.5 419.2V427.1M939.5 418.3V426.2M940.5 416.7V426.0M941.5 417.3V428.9M942.5 418.6V427.7M943.5 418.7V427.2M944.5 417.7V428.8M945.5 420.3V428.0M946.5 420.1V426.7M947.5 419.2V428.4M948.5 419.5V428.2M949.5 419.2V426.8M950.5 419.2V428.3M951.5 417.5V428.7M952.5 418.3V426.0M953.5 420.2V426.0M954.5 420.9V425.3M955.5 416.9V429.1M956.5 412.5V433.5M957.5 417.5V430.7M958.5 418.2V427.5M959.5 419.5V427.6M960.5 418.5V428.6M961.5 420.8V425.4M962.5 417.9V429.9M963.5 417.0V429.6M964.5 416.1V431.3M965.5 419.8V427.5M966.5 419.1V426.9M967.5 417.2V429.1M968.5 416.4V431.2M969.5 420.3V427.2M970.5 419.4V426.3M971.5 419.2V428.7M973.5 416.7V432.4M974.5 413.5V432.5M975.5 414.4V431.6M976.5 415.3V430.7M977.5 416.4V429.5M979.5 420.7V425.9M980.5 420.7V425.3M982.5 415.6V430.4M983.5 416.6V429.4M984.5 417.1V427.4M985.5 414.3V428.8M986.5 414.1V431.9M987.5 415.9V429.4M988.5 416.5V430.1M989.5 417.5V427.3M990.5 418.2V430.5M993.5 419.9V427.4M994.5 420.1V427.4M995.5 420.9V427.4M996.5 416.1V426.7M997.5 417.3V429.3M998.5 414.7V431.3M999.5 419.7V425.3M1000.5 418.2V428.4M1001.5 418.7V428.2M1002.5 418.5V429.5M1004.5 417.7V426.3M1005.5 420.0V427.2M1006.5 416.9V429.1M1007.5 414.3V433.5M1008.5 418.1V430.6M1014.5 421.3V425.1M1015.5 416.1V431.3M1018.5 418.0V427.5M1019.5 420.0V427.7M1020.5 419.6V425.9M1021.5 419.9V426.0M1022.5 417.7V428.9M1023.5 417.9V429.1M1024.5 416.6V429.3M1025.5 417.6V429.6M1026.5 419.3V426.4M1027.5 418.5V426.5M1028.5 416.3V429.7M1029.5 418.2V428.3M1030.5 416.5V427.7M1031.5 418.3V426.1M1032.5 421.4V425.8M1033.5 419.7V425.5M1034.5 419.1V427.3M1035.5 416.8V431.1M1036.5 413.2V432.8M1037.5 415.6V430.4M1038.5 417.1V426.3M1039.5 418.8V427.6M1040.5 419.7V425.6M1041.5 412.5V433.5M1042.5 413.5V432.5M1043.5 419.6V426.8M1044.5 418.5V425.4M1045.5 419.9V426.1M1046.5 419.1V427.4M1047.5 416.2V427.1M1048.5 419.8V426.7M1049.5 420.1V427.3M1050.5 418.6V426.2M1051.5 416.6V429.4M1052.5 414.9V431.1M1053.5 420.4V427.7M1054.5 419.5V427.6M1062.5 418.5V429.7M1063.5 417.7V428.8M1064.5 417.1V426.6M1065.5 418.7V428.5M1066.5 418.6V427.6M1067.5 415.6V430.4M1068.5 416.6V429.4M1069.5 418.0V427.4M1070.5 416.1V429.4M1071.5 419.2V426.4M1072.5 417.0V428.3M1073.5 420.2V429.1M1074.5 416.9V428.1M1075.5 417.1V430.2M1076.5 417.3V426.9M1077.5 419.4V425.8M1078.5 420.5V425.3M1079.5 419.6V425.1M1080.5 418.6V427.4M1081.5 418.9V428.2M1082.5 419.9V428.2M1083.5 416.4V429.7M1084.5 416.3V430.4M1085.5 420.3V427.9M1086.5 412.2V433.8M1087.5 414.0V432.8M1088.5 420.1V426.2M1089.5 420.2V425.3M1090.5 418.9V428.3M1091.5 420.8V425.1M1092.5 418.9V427.4M1095.5 418.6V426.5M1096.5 417.9V429.7M1097.5 420.5V424.4M1098.5 418.9V428.8M1099.5 420.0V427.8M1100.5 416.8V430.6M1101.5 419.0V427.9M1102.5 418.3V426.0M1103.5 413.7V429.2M1104.5 415.1V427.9M1105.5 414.1V431.9M1106.5 415.0V431.0M1107.5 415.9V430.1M1108.5 416.9V429.1M1109.5 420.3V426.2M1110.5 414.3V432.5M1111.5 419.8V427.1M1112.5 419.7V426.3M1113.5 417.4V427.7M1114.5 417.2V428.8M1115.5 414.5V431.5M1116.5 417.0V429.4M1117.5 416.7V426.4M1118.5 416.3V430.4M1119.5 421.0V426.8M1120.5 420.5V427.5M1121.5 413.2V432.8M1122.5 414.1V431.9M1123.5 417.9V429.4M1124.5 420.3V427.3M1125.5 416.9V429.1M1126.5 417.1V430.9M1127.5 419.1V431.0M1128.5 414.4V431.6M1129.5 416.8V428.0M1130.5 418.9V427.8M1131.5 419.7V426.5M1132.5 413.7V433.2M1133.5 416.1V430.7M1134.5 418.5V426.3M1135.5 417.5V429.1M1136.5 419.2V426.2M1137.5 414.7V429.5M1138.5 418.9V426.3M1139.5 415.0V429.8M1143.5 412.5V433.5M1144.5 417.7V426.1M1151.5 420.6V424.1M1152.5 420.8V424.3M1153.5 421.1V424.0M1154.5 419.9V426.5M1155.5 421.2V424.6M1157.5 418.6V427.0M1158.5 416.5V429.8M1159.5 419.5V426.5M1166.5 415.8V428.1M1167.5 417.5V426.3M1168.5 415.4V429.9M1169.5 419.0V427.3M1170.5 416.6V429.4M1171.5 412.2V432.9M1172.5 417.5V427.9M1173.5 415.6V431.2M1174.5 420.1V426.7M1302.5 421.1V424.5M1303.5 419.5V426.1M1304.5 421.2V423.8M1307.5 417.9V429.0M1308.5 420.6V426.2M1309.5 417.1V431.2M1311.5 420.0V426.0M1312.5 418.4V429.1M1313.5 416.9V433.5M1314.5 415.1V430.9M1315.5 420.2V428.2M1316.5 420.7V427.3M1317.5 418.5V429.7M1318.5 421.5V425.1M1319.5 420.5V425.5M1321.5 421.1V424.0M1324.5 419.4V426.6M1325.5 420.8V424.3M1326.5 419.3V426.0M1327.5 421.1V424.6M1328.5 418.2V426.7M1329.5 419.2V426.6M1330.5 416.8V429.1M1331.5 413.5V432.5M1332.5 414.4V431.6M1333.5 415.3V430.7M1334.5 419.1V429.5M1335.5 417.2V428.8M1336.5 418.0V427.7M1337.5 413.8V432.2M1338.5 414.7V431.3M1339.5 420.1V428.3M1340.5 417.6V429.4M1341.5 420.4V428.2M1342.5 419.8V427.6M1343.5 417.4V426.5M1344.5 415.7V431.0M1345.5 415.9V428.9M1346.5 419.1V429.1M1347.5 415.0V430.0M1348.5 415.8V430.2M1349.5 416.8V428.6M1350.5 418.2V427.8" stroke="#6262dc" stroke-width="1" fill="none"/></svg>
<div style="position:absolute;left:1351px;top:199px;width:2px;height:295px;background:#0a0a10;"></div>
<div style="position:absolute;left:0px;top:492px;width:1353px;height:2px;background:#0a0a10;"></div>
<div style="position:absolute;left:0px;top:783px;width:1370px;height:17px;background:#f0f0f0;"></div>
<div style="position:absolute;left:646px;top:791.4px;width:19px;height:1.6px;background:#8a8a8a;border-radius:1px"></div>
<div style="position:absolute;left:0px;top:800px;width:1370px;height:57px;background:#fafafd;"></div>
<div style="position:absolute;left:0px;top:800px;width:1370px;height:1px;background:#d4d4d8;"></div>
<div style="position:absolute;left:0px;top:856px;width:1370px;height:1px;background:#d0d0d4;"></div>
<div class="grab" style="position:absolute;left:0px;top:801px;width:6px;height:55px;background:;"></div>
<div style="position:absolute;left:6px;top:801px;width:1px;height:55px;background:#dcdce2;"></div>
<span class="t" style="left:12.4px;top:806.7px;font-size:12px;line-height:17px;color:#111;transform:scaleX(0.9954);transform-origin:0 50%;">Project Rate (Hz)</span>
<div style="position:absolute;left:110px;top:806px;width:1px;height:17px;background:#b0b0b8;"></div>
<span class="t" style="left:117.4px;top:806.7px;font-size:12px;line-height:17px;color:#111;transform:scaleX(1.0337);transform-origin:0 50%;">Snap-To</span>
<div style="position:absolute;left:191px;top:806px;width:1px;height:17px;background:#b0b0b8;"></div>
<div class="combo" style="left:198px;top:802px;width:317px;height:22px;"></div><span class="t" style="left:202.4px;top:804.7px;font-size:12px;line-height:17px;color:#1a1a1a;transform:scaleX(0.9683);transform-origin:0 50%;">Start and End of Selection</span><svg style="left:502px;top:810px" width="10" height="6" viewBox="0 0 10 6"><path d="M0.6 0.6L5 5L9.4 0.6" fill="none" stroke="#6a6a6a" stroke-width="1"/></svg>
<div class="combo" style="left:12px;top:829px;width:92px;height:23px;border-color:#7a7a7a;"></div><span class="t" style="left:18.0px;top:832.2px;font-size:12px;line-height:17px;color:#1a1a1a;transform:scaleX(0.9110);transform-origin:0 50%;">44100</span><svg style="left:90px;top:838px" width="10" height="6" viewBox="0 0 10 6"><path d="M0.6 0.6L5 5L9.4 0.6" fill="none" stroke="#6a6a6a" stroke-width="1"/></svg>
<div style="position:absolute;left:110px;top:832px;width:1px;height:18px;background:#b0b0b8;"></div>
<div class="combo" style="left:117px;top:830px;width:68px;height:22px;"></div><span class="t" style="left:121.4px;top:832.7px;font-size:12px;line-height:17px;color:#1a1a1a;transform:scaleX(1.0770);transform-origin:0 50%;">Off</span><svg style="left:171px;top:838px" width="10" height="6" viewBox="0 0 10 6"><path d="M0.6 0.6L5 5L9.4 0.6" fill="none" stroke="#6a6a6a" stroke-width="1"/></svg>
<div style="position:absolute;left:191px;top:832px;width:1px;height:18px;background:#b0b0b8;"></div>
<div style="position:absolute;left:198.6px;top:830px;width:155.00000000000003px;height:21px;background:#b9bac2;border-top:2px solid #808088;border-left:2px solid #8c8c94"></div><div style="position:absolute;left:201.1px;top:832px;width:11px;height:18px;background:#d2d3e2;"></div><span class="t" style="left:202.7px;top:831.5px;font-size:14px;line-height:20px;color:#16168c;">0</span><div style="position:absolute;left:212.5px;top:832px;width:11px;height:18px;background:#d2d3e2;"></div><span class="t" style="left:214.1px;top:831.5px;font-size:14px;line-height:20px;color:#16168c;">0</span><span class="t" style="left:225.7px;top:831.5px;font-size:14px;line-height:20px;color:#16168c;">h</span><div style="position:absolute;left:236.1px;top:832px;width:11px;height:18px;background:#d2d3e2;"></div><span class="t" style="left:237.7px;top:831.5px;font-size:14px;line-height:20px;color:#16168c;">4</span><div style="position:absolute;left:247.5px;top:832px;width:11px;height:18px;background:#d2d3e2;"></div><span class="t" style="left:249.1px;top:831.5px;font-size:14px;line-height:20px;color:#16168c;">4</span><span class="t" style="left:260.8px;top:831.5px;font-size:14px;line-height:20px;color:#16168c;">m</span><div style="position:absolute;left:275.7px;top:832px;width:11px;height:18px;background:#d2d3e2;"></div><span class="t" style="left:277.3px;top:831.5px;font-size:14px;line-height:20px;color:#16168c;">3</span><div style="position:absolute;left:287.1px;top:832px;width:11px;height:18px;background:#d2d3e2;"></div><span class="t" style="left:288.7px;top:831.5px;font-size:14px;line-height:20px;color:#16168c;">5</span><span class="t" style="left:297.3px;top:831.5px;font-size:14px;line-height:20px;color:#16168c;">.</span><div style="position:absolute;left:300.7px;top:832px;width:11px;height:18px;background:#d2d3e2;"></div><span class="t" style="left:302.3px;top:831.5px;font-size:14px;line-height:20px;color:#16168c;">5</span><div style="position:absolute;left:311.7px;top:832px;width:11px;height:18px;background:#d2d3e2;"></div><span class="t" style="left:313.3px;top:831.5px;font-size:14px;line-height:20px;color:#16168c;">5</span><div style="position:absolute;left:322.7px;top:832px;width:11px;height:18px;background:#d2d3e2;"></div><span class="t" style="left:324.3px;top:831.5px;font-size:14px;line-height:20px;color:#16168c;">2</span><span class="t" style="left:336.5px;top:831.5px;font-size:14px;line-height:20px;color:#16168c;">s</span><div style="position:absolute;left:345.6px;top:832px;width:8px;height:18px;background:#b9bac2;"></div><svg style="left:346.0px;top:838px" width="8" height="5" viewBox="0 0 8 5"><path d="M0 0H8L4 4.6Z" fill="#111"/></svg>
<div style="position:absolute;left:360.4px;top:830px;width:155.0px;height:21px;background:#b9bac2;border-top:2px solid #808088;border-left:2px solid #8c8c94"></div><div style="position:absolute;left:362.9px;top:832px;width:11px;height:18px;background:#d2d3e2;"></div><span class="t" style="left:364.5px;top:831.5px;font-size:14px;line-height:20px;color:#16168c;">0</span><div style="position:absolute;left:374.29999999999995px;top:832px;width:11px;height:18px;background:#d2d3e2;"></div><span class="t" style="left:375.9px;top:831.5px;font-size:14px;line-height:20px;color:#16168c;">0</span><span class="t" style="left:387.5px;top:831.5px;font-size:14px;line-height:20px;color:#16168c;">h</span><div style="position:absolute;left:397.9px;top:832px;width:11px;height:18px;background:#d2d3e2;"></div><span class="t" style="left:399.5px;top:831.5px;font-size:14px;line-height:20px;color:#16168c;">4</span><div style="position:absolute;left:409.29999999999995px;top:832px;width:11px;height:18px;background:#d2d3e2;"></div><span class="t" style="left:410.9px;top:831.5px;font-size:14px;line-height:20px;color:#16168c;">6</span><span class="t" style="left:422.6px;top:831.5px;font-size:14px;line-height:20px;color:#16168c;">m</span><div style="position:absolute;left:437.5px;top:832px;width:11px;height:18px;background:#d2d3e2;"></div><span class="t" style="left:439.1px;top:831.5px;font-size:14px;line-height:20px;color:#16168c;">1</span><div style="position:absolute;left:448.9px;top:832px;width:11px;height:18px;background:#d2d3e2;"></div><span class="t" style="left:450.5px;top:831.5px;font-size:14px;line-height:20px;color:#16168c;">1</span><span class="t" style="left:459.1px;top:831.5px;font-size:14px;line-height:20px;color:#16168c;">.</span><div style="position:absolute;left:462.5px;top:832px;width:11px;height:18px;background:#d2d3e2;"></div><span class="t" style="left:464.1px;top:831.5px;font-size:14px;line-height:20px;color:#16168c;">3</span><div style="position:absolute;left:473.5px;top:832px;width:11px;height:18px;background:#d2d3e2;"></div><span class="t" style="left:475.1px;top:831.5px;font-size:14px;line-height:20px;color:#16168c;">2</span><div style="position:absolute;left:484.5px;top:832px;width:11px;height:18px;background:#d2d3e2;"></div><span class="t" style="left:486.1px;top:831.5px;font-size:14px;line-height:20px;color:#16168c;">4</span><span class="t" style="left:498.3px;top:831.5px;font-size:14px;line-height:20px;color:#16168c;">s</span><div style="position:absolute;left:507.4px;top:832px;width:8px;height:18px;background:#b9bac2;"></div><svg style="left:507.79999999999995px;top:838px" width="8" height="5" viewBox="0 0 8 5"><path d="M0 0H8L4 4.6Z" fill="#111"/></svg>
<div class="grab" style="position:absolute;left:523px;top:801px;width:10px;height:55px;background:;"></div>
<div style="position:absolute;left:521px;top:801px;width:1px;height:55px;background:#d8d8de;"></div>
<div style="position:absolute;left:535px;top:809px;width:223px;height:38px;background:#b9bac2;border-top:2px solid #808088;border-left:2px solid #8c8c94"></div><div style="position:absolute;left:537px;top:811px;width:40px;height:35px;background:#d3d4dc;"></div><div style="position:absolute;left:608px;top:811px;width:40px;height:35px;background:#d3d4dc;"></div><div style="position:absolute;left:686px;top:811px;width:40px;height:35px;background:#d3d4dc;"></div>
<span class="t" style="left:538.6px;top:810.6px;font-size:28.6px;line-height:36px;color:#16168c;">0</span>
<span class="t" style="left:558.0px;top:810.6px;font-size:28.6px;line-height:36px;color:#16168c;">0</span>
<span class="t" style="left:584.0px;top:810.6px;font-size:28.6px;line-height:36px;color:#16168c;">h</span>
<span class="t" style="left:611.4px;top:810.6px;font-size:28.6px;line-height:36px;color:#16168c;">4</span>
<span class="t" style="left:630.6px;top:810.6px;font-size:28.6px;line-height:36px;color:#16168c;">4</span>
<span class="t" style="left:654.5px;top:810.6px;font-size:28.6px;line-height:36px;color:#16168c;">m</span>
<span class="t" style="left:687.6px;top:810.6px;font-size:28.6px;line-height:36px;color:#16168c;">3</span>
<span class="t" style="left:707.6px;top:810.6px;font-size:28.6px;line-height:36px;color:#16168c;">6</span>
<span class="t" style="left:733.5px;top:810.6px;font-size:28.6px;line-height:36px;color:#16168c;">s</span>
<div style="position:absolute;left:750px;top:811px;width:8px;height:35px;background:#c4c5cb;"></div>
<svg style="left:750.6px;top:825px" width="8" height="5" viewBox="0 0 8 5"><path d="M0 0H8L4 4.6Z" fill="#111"/></svg>
<div style="position:absolute;left:761px;top:801px;width:1px;height:55px;background:#d0d0d8;"></div>
<div style="position:absolute;left:764px;top:801px;width:1px;height:55px;background:#d0d0d8;"></div>
<div style="position:absolute;left:0px;top:857px;width:1370px;height:23px;background:#f1f1f2;"></div>
<div style="position:absolute;left:4px;top:857px;width:1px;height:23px;background:#e2e2e4;"></div>
<span class="t" style="left:9.4px;top:861.5px;font-size:12px;line-height:17px;color:#1a1a1a;transform:scaleX(0.9867);transform-origin:0 50%;">Stopped.</span>
<div style="position:absolute;left:175px;top:858px;width:1px;height:22px;background:#d4d4d6;"></div>
<span class="t" style="left:180.4px;top:861.5px;font-size:12px;line-height:17px;color:#1a1a1a;transform:scaleX(0.9884);transform-origin:0 50%;">Click and drag to select audio</span>
<div style="position:absolute;left:1195px;top:858px;width:1px;height:22px;background:#d4d4d6;"></div>
<svg style="left:1359px;top:869px" width="10" height="10" viewBox="0 0 10 10"><path d="M9 3V4M9 6V7M6 6V7M9 9V10M6 9V10M3 9V10" stroke="#b0b0b0" stroke-width="1.4"/></svg>
<div class="a" style="left:477px;top:368px;width:424px;height:216px;border-radius:8px;background:#f1f1f5;box-shadow:0 0 0 1px rgba(110,110,120,.3),0 12px 30px 3px rgba(0,0,0,.36),0 3px 10px rgba(0,0,0,.16);overflow:hidden"><div style="height:31px;background:#fff"></div></div>
<span class="t" style="left:485.4px;top:375.5px;font-size:12px;line-height:17px;color:#1a1a1a;transform:scaleX(1.0676);transform-origin:0 50%;">Amplify</span>
<svg style="left:780px;top:376px" width="106" height="14" viewBox="0 0 106 14" fill="none" stroke="#1a1a1a" stroke-width="1.1">
<path d="M2 7.5H12"/><rect x="47.5" y="2.5" width="9" height="9" rx="1"/><path d="M93 2.2L103 12.2M103 2.2L93 12.2"/></svg>
<span class="t" style="left:598.4px;top:411.5px;font-size:12px;line-height:17px;color:#1a1a1a;transform:scaleX(1.0188);transform-origin:0 50%;">Amplification (dB):</span>
<div class="a" style="left:709px;top:409px;width:70px;height:23px;background:#fff;border:1px solid #e4e4e8;border-bottom:1px solid #8a8a8e;border-radius:3px"></div><span class="t" style="left:714.6px;top:412.0px;font-size:12px;line-height:17px;color:#1a1a1a;transform:scaleX(0.8752);transform-origin:0 50%;">1.5</span>
<div style="position:absolute;left:489px;top:453px;width:399px;height:3px;background:#e2e2e4;border-radius:2px;border:1px solid #d2d2d6"></div>
<svg style="left:688px;top:445px" width="14" height="20" viewBox="0 0 14 20"><path d="M1.5 0.8H11.5Q12.3 0.8 12.3 1.6V14L6.5 19.2L0.7 14V1.6Q0.7 0.8 1.5 0.8Z" fill="#0a72cc"/></svg>
<span class="t" style="left:578.4px;top:476.5px;font-size:12px;line-height:17px;color:#1a1a1a;transform:scaleX(0.9853);transform-origin:0 50%;">New Peak Amplitude (dB):</span>
<div class="a" style="left:728px;top:475px;width:70px;height:22px;background:#fff;border:1px solid #e4e4e8;border-bottom:1px solid #8a8a8e;border-radius:3px"></div><span class="t" style="left:733.0px;top:477.5px;font-size:12px;line-height:17px;color:#1a1a1a;transform:scaleX(0.8882);transform-origin:0 50%;">2.1591</span>
<div class="a" style="left:640px;top:511px;width:13px;height:13px;border:1px solid #5a5a5e;border-radius:3px;background:#f6f6f8"></div>
<span class="t" style="left:656.4px;top:509.5px;font-size:12px;line-height:17px;color:#1a1a1a;transform:scaleX(1.0343);transform-origin:0 50%;">Allow clipping</span>
<div class="a" style="left:491px;top:547px;width:73px;height:21px;background:#fdfdfd;border:1px solid #1f4f66;border-radius:4px"></div>
<div class="a" style="left:493px;top:549px;width:69px;height:17px;border:1px dotted #222;border-radius:2px"></div>
<span class="t" style="left:505.9px;top:550.1px;font-size:12px;line-height:17px;color:#1a1a1a;transform:scaleX(1.0054);transform-origin:50% 50%;">Manage</span>
<div class="a" style="left:571px;top:547px;width:72px;height:21px;background:#f5f5f6;border:1px solid #e9e9ec;border-radius:4px"></div>
<span class="t" style="left:586.1px;top:550.1px;font-size:12px;line-height:17px;color:#a2a2a4;transform:scaleX(0.9606);transform-origin:50% 50%;">Preview</span>
<div class="a" style="left:694px;top:547px;width:72px;height:21px;background:#f5f5f6;border:1px solid #e9e9ec;border-radius:4px"></div>
<span class="t" style="left:721.3px;top:550.1px;font-size:12px;line-height:17px;color:#a2a2a4;transform:scaleX(0.8882);transform-origin:50% 50%;">OK</span>
<div class="a" style="left:777px;top:547px;width:73px;height:21px;background:#fdfdfd;border:1px solid #d0d0d4;border-bottom-color:#b8b8bc;border-radius:4px"></div>
<span class="t" style="left:794.7px;top:550.1px;font-size:12px;line-height:17px;color:#1a1a1a;transform:scaleX(0.9638);transform-origin:50% 50%;">Cancel</span>
<div class="a" style="left:861px;top:544px;width:26px;height:26px;background:#fbfbfd;border:1px solid #d8d8dc;border-radius:4px"></div>
<div class="a" style="left:863.4px;top:547.4px;width:20.4px;height:20.4px;background:#5d90e4;border-radius:50%"></div>
<span class="t" style="left:869.2px;top:547.0px;font-size:16px;line-height:22px;color:#fff;">?</span>
</div></body></html>
